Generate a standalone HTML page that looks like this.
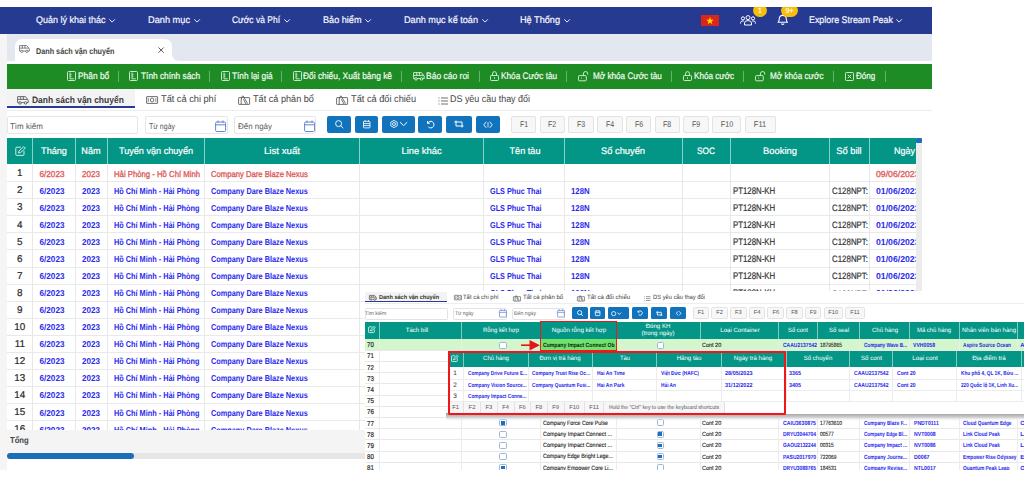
<!DOCTYPE html>
<html><head><meta charset="utf-8"><style>
html,body{margin:0;padding:0;width:1024px;height:478px;overflow:hidden;background:#fff;}
body{position:relative;font-family:'Liberation Sans', sans-serif;text-rendering:geometricPrecision;}
.a{position:absolute;display:block;}
.t{position:absolute;white-space:nowrap;display:block;}
svg.a{overflow:visible;}
</style></head><body>
<div class="a" style="left:0.00px;top:7.00px;width:932.00px;height:463.00px;background:#f5f5f5;"></div>
<div class="a" style="left:0.00px;top:7.00px;width:932.00px;height:26.50px;background:#263a91;"></div>
<div class="a" style="left:7.00px;top:33.50px;width:925.00px;height:27.50px;background:#e3e7ef;"></div>
<div class="a" style="left:7.00px;top:61.00px;width:925.00px;height:3.00px;background:#fff;"></div>
<div class="a" style="left:14.50px;top:39.00px;width:157.00px;height:25.00px;background:#fff;border-radius:7px 7px 0 0;"></div>
<div class="a" style="left:171.50px;top:53.00px;width:8.00px;height:8.00px;background:#fff;"></div>
<div class="a" style="left:171.50px;top:52.50px;width:9.00px;height:8.50px;background:#e3e7ef;border-radius:0 0 0 7px;"></div>
<div class="a" style="left:7.00px;top:64.00px;width:925.00px;height:25.00px;background:#1e8c25;"></div>
<div class="a" style="left:7.00px;top:89.00px;width:925.00px;height:381.00px;background:#fff;"></div>
<div class="a" style="left:7.00px;top:89.00px;width:128.00px;height:18.00px;background:#f3f3f3;"></div>
<div class="a" style="left:7.00px;top:106.30px;width:128.00px;height:2.00px;background:#2b3a9a;"></div>
<div class="a" style="left:7.00px;top:110.00px;width:925.00px;height:0.80px;background:#ededed;"></div>
<span class="t" style="top:16.29px;font-size:9.7px;line-height:9.7px;color:#f6f7ff;-webkit-text-stroke:0.2px currentColor;left:36.20px;transform:scaleX(0.9271);transform-origin:0 50%;">Quản lý khai thác</span>
<svg class="a" style="left:109.20px;top:18.60px;" width="6.5" height="4" viewBox="0 0 6.5 4"><polyline points="0.6,0.6 3.1,3.1 5.6,0.6" fill="none" stroke="#e8ebff" stroke-width="1.0" stroke-linecap="round" stroke-linejoin="round"/></svg>
<span class="t" style="top:16.29px;font-size:9.7px;line-height:9.7px;color:#f6f7ff;-webkit-text-stroke:0.2px currentColor;left:148.00px;transform:scaleX(0.9512);transform-origin:0 50%;">Danh mục</span>
<svg class="a" style="left:193.60px;top:18.60px;" width="6.5" height="4" viewBox="0 0 6.5 4"><polyline points="0.6,0.6 3.1,3.1 5.6,0.6" fill="none" stroke="#e8ebff" stroke-width="1.0" stroke-linecap="round" stroke-linejoin="round"/></svg>
<span class="t" style="top:16.29px;font-size:9.7px;line-height:9.7px;color:#f6f7ff;-webkit-text-stroke:0.2px currentColor;left:232.00px;transform:scaleX(0.8752);transform-origin:0 50%;">Cước và Phí</span>
<svg class="a" style="left:283.60px;top:18.60px;" width="6.5" height="4" viewBox="0 0 6.5 4"><polyline points="0.6,0.6 3.1,3.1 5.6,0.6" fill="none" stroke="#e8ebff" stroke-width="1.0" stroke-linecap="round" stroke-linejoin="round"/></svg>
<span class="t" style="top:16.29px;font-size:9.7px;line-height:9.7px;color:#f6f7ff;-webkit-text-stroke:0.2px currentColor;left:323.00px;transform:scaleX(0.9405);transform-origin:0 50%;">Bảo hiểm</span>
<svg class="a" style="left:365.10px;top:18.60px;" width="6.5" height="4" viewBox="0 0 6.5 4"><polyline points="0.6,0.6 3.1,3.1 5.6,0.6" fill="none" stroke="#e8ebff" stroke-width="1.0" stroke-linecap="round" stroke-linejoin="round"/></svg>
<span class="t" style="top:16.29px;font-size:9.7px;line-height:9.7px;color:#f6f7ff;-webkit-text-stroke:0.2px currentColor;left:404.00px;transform:scaleX(0.9412);transform-origin:0 50%;">Danh mục kế toán</span>
<svg class="a" style="left:481.60px;top:18.60px;" width="6.5" height="4" viewBox="0 0 6.5 4"><polyline points="0.6,0.6 3.1,3.1 5.6,0.6" fill="none" stroke="#e8ebff" stroke-width="1.0" stroke-linecap="round" stroke-linejoin="round"/></svg>
<span class="t" style="top:16.29px;font-size:9.7px;line-height:9.7px;color:#f6f7ff;-webkit-text-stroke:0.2px currentColor;left:520.00px;transform:scaleX(0.9440);transform-origin:0 50%;">Hệ Thống</span>
<svg class="a" style="left:563.60px;top:18.60px;" width="6.5" height="4" viewBox="0 0 6.5 4"><polyline points="0.6,0.6 3.1,3.1 5.6,0.6" fill="none" stroke="#e8ebff" stroke-width="1.0" stroke-linecap="round" stroke-linejoin="round"/></svg>
<span class="t" style="top:16.29px;font-size:9.7px;line-height:9.7px;color:#f6f7ff;-webkit-text-stroke:0.2px currentColor;left:808.80px;transform:scaleX(0.9165);transform-origin:0 50%;">Explore Stream Peak</span>
<svg class="a" style="left:896.30px;top:18.60px;" width="6.5" height="4" viewBox="0 0 6.5 4"><polyline points="0.6,0.6 3.1,3.1 5.6,0.6" fill="none" stroke="#e8ebff" stroke-width="1.0" stroke-linecap="round" stroke-linejoin="round"/></svg>
<div class="a" style="left:701.00px;top:15.20px;width:18.30px;height:11.00px;background:#da251d;"></div>
<svg class="a" style="left:706.20px;top:16.70px;" width="8" height="8" viewBox="0 0 8 8"><polygon points="4,0 4.94,2.7 7.8,2.76 5.52,4.5 6.35,7.24 4,5.6 1.65,7.24 2.48,4.5 0.2,2.76 3.06,2.7" fill="#ffde00"/></svg>
<svg class="a" style="left:740.40px;top:14.50px;" width="16" height="10.5" viewBox="0 0 16 10.5"><circle cx="8" cy="2.6" r="2" fill="none" stroke="#fff" stroke-width="1"/><circle cx="3" cy="3.4" r="1.6" fill="none" stroke="#fff" stroke-width="1"/><circle cx="13" cy="3.4" r="1.6" fill="none" stroke="#fff" stroke-width="1"/><path d="M4.5 10 V8 Q4.5 5.6 8 5.6 Q11.5 5.6 11.5 8 V10 Z" fill="none" stroke="#fff" stroke-width="1"/><path d="M0.6 8.6 V7.6 Q0.6 6 2.6 6 H3.8 M15.4 8.6 V7.6 Q15.4 6 13.4 6 H12.2" fill="none" stroke="#fff" stroke-width="1"/></svg>
<div class="a" style="left:753.30px;top:4.00px;width:13.40px;height:13.40px;background:#f8bf0a;border-radius:50%;"></div>
<span class="t" style="top:7.31px;font-size:7.2px;line-height:7.2px;color:#fff;-webkit-text-stroke:0.12px currentColor;left:760.00px;transform:translateX(-50%);">1</span>
<svg class="a" style="left:776.70px;top:14.30px;" width="11.5" height="11.5" viewBox="0 0 11.5 11.5"><path d="M1 8.3 Q2.2 7.3 2.2 5.2 Q2.2 1.4 5.75 1.4 Q9.3 1.4 9.3 5.2 Q9.3 7.3 10.5 8.3 Z" fill="none" stroke="#fff" stroke-width="1.1" stroke-linejoin="round"/><line x1="5.75" y1="0.2" x2="5.75" y2="1.4" stroke="#fff" stroke-width="1.1"/><path d="M4.3 9.6 Q5.75 11.2 7.2 9.6" fill="none" stroke="#fff" stroke-width="1.1"/></svg>
<div class="a" style="left:781.20px;top:4.00px;width:17.00px;height:13.40px;background:#f8bf0a;border-radius:7px;"></div>
<span class="t" style="top:7.31px;font-size:7.2px;line-height:7.2px;color:#fff;-webkit-text-stroke:0.12px currentColor;left:789.70px;transform:translateX(-50%);">9+</span>
<div class="a" style="left:0.00px;top:0.00px;width:1024.00px;height:7.00px;background:#fff;"></div>
<svg class="a" style="left:19.30px;top:45.20px;" width="11" height="8" viewBox="0 0 11 8"><path d="M0.55 0.55 H7.73 L10.30 3.86 V6.07 H0.55 Z" fill="none" stroke="#666" stroke-width="0.8" stroke-linejoin="round"/><path d="M0.55 3.13 H9.75 M3.40 0.55 V3.13 M5.89 0.55 V3.13" stroke="#666" stroke-width="0.8"/><circle cx="2.76" cy="6.35" r="1.15" fill="#fff" stroke="#666" stroke-width="0.8"/><circle cx="7.91" cy="6.35" r="1.15" fill="#fff" stroke="#666" stroke-width="0.8"/></svg>
<span class="t" style="top:47.09px;font-size:8.4px;line-height:8.4px;color:#444;font-weight:700;left:35.70px;transform:scaleX(0.8649);transform-origin:0 50%;">Danh sách vận chuyển</span>
<svg class="a" style="left:158.20px;top:47.30px;" width="6.2" height="6.2" viewBox="0 0 6.2 6.2"><path d="M0.5 0.5 L5.7 5.7 M5.7 0.5 L0.5 5.7" stroke="#555" stroke-width="1.0"/></svg>
<svg class="a" style="left:66.80px;top:71.40px;" width="9" height="10" viewBox="0 0 9 10"><rect x="0.5" y="0.5" width="8" height="9" rx="1" fill="none" stroke="#e8f5e8" stroke-width="0.85"/><path d="M3 1.5 V7.8 H6.8" fill="none" stroke="#e8f5e8" stroke-width="0.85"/><path d="M3 3.2 H4.6 M3 5.2 H4.6" stroke="#e8f5e8" stroke-width="0.68"/></svg>
<span class="t" style="top:71.66px;font-size:9.5px;line-height:9.5px;color:#f4fbf4;-webkit-text-stroke:0.2px currentColor;left:77.60px;transform:scaleX(0.8812);transform-origin:0 50%;">Phân bổ</span>
<div class="a" style="left:117.60px;top:70.60px;width:0.80px;height:11.00px;background:rgba(255,255,255,0.33);"></div>
<svg class="a" style="left:129.30px;top:71.40px;" width="9" height="10" viewBox="0 0 9 10"><rect x="0.5" y="0.5" width="8" height="9" rx="1" fill="none" stroke="#e8f5e8" stroke-width="0.85"/><path d="M3 1.5 V7.8 H6.8" fill="none" stroke="#e8f5e8" stroke-width="0.85"/><path d="M3 3.2 H4.6 M3 5.2 H4.6" stroke="#e8f5e8" stroke-width="0.68"/></svg>
<span class="t" style="top:71.66px;font-size:9.5px;line-height:9.5px;color:#f4fbf4;-webkit-text-stroke:0.2px currentColor;left:140.50px;transform:scaleX(0.8741);transform-origin:0 50%;">Tính chính sách</span>
<div class="a" style="left:208.80px;top:70.60px;width:0.80px;height:11.00px;background:rgba(255,255,255,0.33);"></div>
<svg class="a" style="left:220.50px;top:71.40px;" width="9" height="10" viewBox="0 0 9 10"><rect x="0.5" y="0.5" width="8" height="9" rx="1" fill="none" stroke="#e8f5e8" stroke-width="0.85"/><path d="M3 1.5 V7.8 H6.8" fill="none" stroke="#e8f5e8" stroke-width="0.85"/><path d="M3 3.2 H4.6 M3 5.2 H4.6" stroke="#e8f5e8" stroke-width="0.68"/></svg>
<span class="t" style="top:71.66px;font-size:9.5px;line-height:9.5px;color:#f4fbf4;-webkit-text-stroke:0.2px currentColor;left:232.00px;transform:scaleX(0.8734);transform-origin:0 50%;">Tính lại giá</span>
<div class="a" style="left:280.60px;top:70.60px;width:0.80px;height:11.00px;background:rgba(255,255,255,0.33);"></div>
<svg class="a" style="left:293.00px;top:71.40px;" width="9" height="10" viewBox="0 0 9 10"><rect x="0.5" y="0.5" width="8" height="9" rx="1" fill="none" stroke="#e8f5e8" stroke-width="0.85"/><path d="M3 1.5 V7.8 H6.8" fill="none" stroke="#e8f5e8" stroke-width="0.85"/><path d="M3 3.2 H4.6 M3 5.2 H4.6" stroke="#e8f5e8" stroke-width="0.68"/></svg>
<span class="t" style="top:71.66px;font-size:9.5px;line-height:9.5px;color:#f4fbf4;-webkit-text-stroke:0.2px currentColor;left:303.00px;transform:scaleX(0.8823);transform-origin:0 50%;">Đối chiếu, Xuất bảng kê</span>
<div class="a" style="left:401.00px;top:70.60px;width:0.80px;height:11.00px;background:rgba(255,255,255,0.33);"></div>
<svg class="a" style="left:412.80px;top:72.20px;" width="12" height="8.5" viewBox="0 0 12 8.5"><path d="M0.60 0.60 H8.40 L11.20 4.20 V6.60 H0.60 Z" fill="none" stroke="#e8f5e8" stroke-width="0.85" stroke-linejoin="round"/><path d="M0.60 3.40 H10.60 M3.70 0.60 V3.40 M6.40 0.60 V3.40" stroke="#e8f5e8" stroke-width="0.85"/><circle cx="3.00" cy="6.90" r="1.25" fill="#1e8c25" stroke="#e8f5e8" stroke-width="0.85"/><circle cx="8.60" cy="6.90" r="1.25" fill="#1e8c25" stroke="#e8f5e8" stroke-width="0.85"/></svg>
<span class="t" style="top:71.66px;font-size:9.5px;line-height:9.5px;color:#f4fbf4;-webkit-text-stroke:0.2px currentColor;left:426.00px;transform:scaleX(0.8947);transform-origin:0 50%;">Báo cáo roi</span>
<div class="a" style="left:478.60px;top:70.60px;width:0.80px;height:11.00px;background:rgba(255,255,255,0.33);"></div>
<svg class="a" style="left:490.00px;top:71.40px;" width="9" height="10" viewBox="0 0 9 10"><rect x="0.5" y="4.5" width="8" height="5" rx="0.8" fill="none" stroke="#e8f5e8" stroke-width="0.85"/><path d="M2.5 4.5 V3 Q2.5 0.6 4.5 0.6 Q6.5 0.6 6.5 3 V4.5" fill="none" stroke="#e8f5e8" stroke-width="0.85"/><line x1="4.5" y1="6.3" x2="4.5" y2="7.8" stroke="#e8f5e8" stroke-width="0.85"/></svg>
<span class="t" style="top:71.66px;font-size:9.5px;line-height:9.5px;color:#f4fbf4;-webkit-text-stroke:0.2px currentColor;left:500.80px;transform:scaleX(0.8663);transform-origin:0 50%;">Khóa Cước tàu</span>
<div class="a" style="left:565.60px;top:70.60px;width:0.80px;height:11.00px;background:rgba(255,255,255,0.33);"></div>
<svg class="a" style="left:578.30px;top:71.40px;" width="9" height="10" viewBox="0 0 9 10"><rect x="0.5" y="4.6" width="7.8" height="5.2" rx="0.9" fill="none" stroke="#e8f5e8" stroke-width="0.85"/><path d="M5.4 4.6 V2.9 Q5.4 0.5 7.6 0.5 Q9.8 0.5 9.8 2.9 V3.6" fill="none" stroke="#e8f5e8" stroke-width="0.85"/><line x1="3.6" y1="6.6" x2="3.6" y2="7.6" stroke="#e8f5e8" stroke-width="0.85"/></svg>
<span class="t" style="top:71.66px;font-size:9.5px;line-height:9.5px;color:#f4fbf4;-webkit-text-stroke:0.2px currentColor;left:592.60px;transform:scaleX(0.8592);transform-origin:0 50%;">Mở khóa Cước tàu</span>
<div class="a" style="left:670.70px;top:70.60px;width:0.80px;height:11.00px;background:rgba(255,255,255,0.33);"></div>
<svg class="a" style="left:683.00px;top:71.40px;" width="9" height="10" viewBox="0 0 9 10"><rect x="0.5" y="4.5" width="8" height="5" rx="0.8" fill="none" stroke="#e8f5e8" stroke-width="0.85"/><path d="M2.5 4.5 V3 Q2.5 0.6 4.5 0.6 Q6.5 0.6 6.5 3 V4.5" fill="none" stroke="#e8f5e8" stroke-width="0.85"/><line x1="4.5" y1="6.3" x2="4.5" y2="7.8" stroke="#e8f5e8" stroke-width="0.85"/></svg>
<span class="t" style="top:71.66px;font-size:9.5px;line-height:9.5px;color:#f4fbf4;-webkit-text-stroke:0.2px currentColor;left:693.60px;transform:scaleX(0.8567);transform-origin:0 50%;">Khóa cước</span>
<div class="a" style="left:743.40px;top:70.60px;width:0.80px;height:11.00px;background:rgba(255,255,255,0.33);"></div>
<svg class="a" style="left:755.40px;top:71.40px;" width="9" height="10" viewBox="0 0 9 10"><rect x="0.5" y="4.6" width="7.8" height="5.2" rx="0.9" fill="none" stroke="#e8f5e8" stroke-width="0.85"/><path d="M5.4 4.6 V2.9 Q5.4 0.5 7.6 0.5 Q9.8 0.5 9.8 2.9 V3.6" fill="none" stroke="#e8f5e8" stroke-width="0.85"/><line x1="3.6" y1="6.6" x2="3.6" y2="7.6" stroke="#e8f5e8" stroke-width="0.85"/></svg>
<span class="t" style="top:71.66px;font-size:9.5px;line-height:9.5px;color:#f4fbf4;-webkit-text-stroke:0.2px currentColor;left:770.00px;transform:scaleX(0.8612);transform-origin:0 50%;">Mở khóa cước</span>
<div class="a" style="left:832.50px;top:70.60px;width:0.80px;height:11.00px;background:rgba(255,255,255,0.33);"></div>
<svg class="a" style="left:845.00px;top:72.00px;" width="9" height="9" viewBox="0 0 9 9"><rect x="0.5" y="0.5" width="8" height="8" rx="0.8" fill="none" stroke="#e8f5e8" stroke-width="0.85"/><path d="M2.8 2.8 L6.2 6.2 M6.2 2.8 L2.8 6.2" stroke="#e8f5e8" stroke-width="0.85"/></svg>
<span class="t" style="top:71.66px;font-size:9.5px;line-height:9.5px;color:#f4fbf4;-webkit-text-stroke:0.2px currentColor;left:856.40px;transform:scaleX(0.8451);transform-origin:0 50%;">Đóng</span>
<div class="a" style="left:885.00px;top:70.60px;width:0.80px;height:11.00px;background:rgba(255,255,255,0.33);"></div>
<svg class="a" style="left:17.00px;top:95.80px;" width="12" height="8.5" viewBox="0 0 12 8.5"><path d="M0.60 0.60 H8.40 L11.20 4.20 V6.60 H0.60 Z" fill="none" stroke="#555" stroke-width="0.85" stroke-linejoin="round"/><path d="M0.60 3.40 H10.60 M3.70 0.60 V3.40 M6.40 0.60 V3.40" stroke="#555" stroke-width="0.85"/><circle cx="3.00" cy="6.90" r="1.25" fill="#f3f3f3" stroke="#555" stroke-width="0.85"/><circle cx="8.60" cy="6.90" r="1.25" fill="#f3f3f3" stroke="#555" stroke-width="0.85"/></svg>
<span class="t" style="top:95.73px;font-size:9.3px;line-height:9.3px;color:#3a3a3a;font-weight:700;left:31.90px;transform:scaleX(0.9112);transform-origin:0 50%;">Danh sách vận chuyển</span>
<svg class="a" style="left:146.00px;top:95.80px;" width="12" height="8" viewBox="0 0 12 8"><rect x="0.6" y="0.6" width="11" height="6.8" rx="0.4" fill="none" stroke="#555" stroke-width="0.85"/><ellipse cx="6.1" cy="4" rx="1.7" ry="2" fill="none" stroke="#555" stroke-width="0.85"/><path d="M2.2 2 Q2.8 4 2.2 6 M10 2 Q9.4 4 10 6" fill="none" stroke="#555" stroke-width="0.68"/></svg>
<span class="t" style="top:95.20px;font-size:9.8px;line-height:9.8px;color:#444;left:160.70px;transform:scaleX(0.9403);transform-origin:0 50%;">Tất cả chi phí</span>
<svg class="a" style="left:237.60px;top:94.80px;" width="12" height="10" viewBox="0 0 12 10"><rect x="0.6" y="2.6" width="11" height="6.8" rx="0.5" fill="none" stroke="#555" stroke-width="0.85"/><path d="M3.2 9.2 L3.2 5 Q3.2 1 5 0.8 L9.6 8.6 M5.4 4.2 L8 9" fill="none" stroke="#555" stroke-width="0.85"/></svg>
<span class="t" style="top:95.20px;font-size:9.8px;line-height:9.8px;color:#444;left:252.70px;transform:scaleX(0.9318);transform-origin:0 50%;">Tất cả phân bổ</span>
<svg class="a" style="left:335.60px;top:94.80px;" width="12" height="10" viewBox="0 0 12 10"><rect x="0.6" y="2.6" width="11" height="6.8" rx="0.5" fill="none" stroke="#555" stroke-width="0.85"/><path d="M3.2 9.2 L3.2 5 Q3.2 1 5 0.8 L9.6 8.6 M5.4 4.2 L8 9" fill="none" stroke="#555" stroke-width="0.85"/></svg>
<span class="t" style="top:95.20px;font-size:9.8px;line-height:9.8px;color:#444;left:350.60px;transform:scaleX(0.9411);transform-origin:0 50%;">Tất cả đối chiếu</span>
<svg class="a" style="left:438.00px;top:97.30px;" width="10" height="8" viewBox="0 0 10 8"><path d="M0.5 1 h1 M0.5 4 h1 M0.5 7 h1 M3 1 H10 M3 4 H10 M3 7 H10" stroke="#555" stroke-width="0.85"/></svg>
<span class="t" style="top:95.20px;font-size:9.8px;line-height:9.8px;color:#444;left:450.00px;transform:scaleX(0.9123);transform-origin:0 50%;">DS yêu cầu thay đổi</span>
<div class="a" style="left:7.30px;top:115.60px;width:130.60px;height:18.70px;background:#fff;border:0.8px solid #e6e6e6;border-radius:2px;box-sizing:border-box;"></div>
<span class="t" style="top:122.56px;font-size:8.2px;line-height:8.2px;color:#555;left:10.30px;transform:scaleX(0.9741);transform-origin:0 50%;">Tìm kiếm</span>
<div class="a" style="left:145.20px;top:115.60px;width:82.40px;height:18.70px;background:#fff;border:0.8px solid #e6e6e6;border-radius:2px;box-sizing:border-box;"></div>
<span class="t" style="top:122.56px;font-size:8.2px;line-height:8.2px;color:#555;left:148.50px;transform:scaleX(0.8520);transform-origin:0 50%;">Từ ngày</span>
<svg class="a" style="left:215.40px;top:119.80px;" width="11" height="12" viewBox="0 0 11 12"><rect x="0.6" y="2" width="10" height="9.5" rx="1.2" fill="none" stroke="#5b80cf" stroke-width="0.95"/><line x1="0.6" y1="4.8" x2="10.6" y2="4.8" stroke="#5b80cf" stroke-width="0.95"/><line x1="3" y1="0.5" x2="3" y2="3" stroke="#5b80cf" stroke-width="0.95"/><line x1="8" y1="0.5" x2="8" y2="3" stroke="#5b80cf" stroke-width="0.95"/></svg>
<div class="a" style="left:234.20px;top:115.60px;width:82.10px;height:18.70px;background:#fff;border:0.8px solid #e6e6e6;border-radius:2px;box-sizing:border-box;"></div>
<span class="t" style="top:122.56px;font-size:8.2px;line-height:8.2px;color:#555;left:238.20px;transform:scaleX(0.9697);transform-origin:0 50%;">Đến ngày</span>
<svg class="a" style="left:304.10px;top:119.80px;" width="11" height="12" viewBox="0 0 11 12"><rect x="0.6" y="2" width="10" height="9.5" rx="1.2" fill="none" stroke="#5b80cf" stroke-width="0.95"/><line x1="0.6" y1="4.8" x2="10.6" y2="4.8" stroke="#5b80cf" stroke-width="0.95"/><line x1="3" y1="0.5" x2="3" y2="3" stroke="#5b80cf" stroke-width="0.95"/><line x1="8" y1="0.5" x2="8" y2="3" stroke="#5b80cf" stroke-width="0.95"/></svg>
<div class="a" style="left:326.90px;top:116.00px;width:24.20px;height:16.80px;background:#1173bc;border-radius:2px;"></div>
<div class="a" style="left:354.80px;top:116.00px;width:23.20px;height:16.80px;background:#1173bc;border-radius:2px;"></div>
<div class="a" style="left:381.90px;top:116.00px;width:33.10px;height:16.80px;background:#1173bc;border-radius:2px;"></div>
<div class="a" style="left:418.20px;top:116.00px;width:24.20px;height:16.80px;background:#1173bc;border-radius:2px;"></div>
<div class="a" style="left:446.30px;top:116.00px;width:25.70px;height:16.80px;background:#1173bc;border-radius:2px;"></div>
<div class="a" style="left:475.70px;top:116.00px;width:24.30px;height:16.80px;background:#1173bc;border-radius:2px;"></div>
<svg class="a" style="left:334.80px;top:120.40px;" width="9" height="9" viewBox="0 0 9 9"><circle cx="3.6" cy="3.6" r="3" fill="none" stroke="#fff" stroke-width="0.9"/><line x1="5.8" y1="5.8" x2="8" y2="8" stroke="#fff" stroke-width="0.9" stroke-linecap="round"/></svg>
<svg class="a" style="left:362.80px;top:120.20px;" width="7.5" height="8.2" viewBox="0 0 7.5 8.2"><rect x="0.5" y="1.3" width="6.5" height="6.6" rx="0.6" fill="none" stroke="#fff" stroke-width="0.85"/><path d="M0.5 3.6 H7 M0.5 5.6 H7 M2 0.2 V1.8 M5.5 0.2 V1.8" stroke="#fff" stroke-width="0.85"/></svg>
<svg class="a" style="left:390.00px;top:120.20px;" width="18" height="8" viewBox="0 0 18 8"><polygon points="4,0.4 7.2,2.2 7.2,5.8 4,7.6 0.8,5.8 0.8,2.2" fill="none" stroke="#fff" stroke-width="0.85"/><circle cx="4" cy="4" r="1.5" fill="none" stroke="#fff" stroke-width="0.85"/><polyline points="10,2.2 13.6,5.6 17.2,2.2" fill="none" stroke="#fff" stroke-width="1"/></svg>
<svg class="a" style="left:426.30px;top:120.20px;" width="8.5" height="8.5" viewBox="0 0 8.5 8.5"><path d="M1.5 1 V3.3 H3.8" fill="none" stroke="#fff" stroke-width="1"/><path d="M1.7 3.2 A3.3 3.3 0 1 1 2.4 7" fill="none" stroke="#fff" stroke-width="1"/></svg>
<svg class="a" style="left:454.15px;top:120.40px;" width="10" height="8" viewBox="0 0 10 8"><path d="M2 0.5 V6 H9.5 M0.3 2 H8 V7.5" fill="none" stroke="#fff" stroke-width="1"/></svg>
<svg class="a" style="left:482.90px;top:120.60px;" width="10" height="8" viewBox="0 0 10 8"><path d="M3.2 0.8 L0.8 3.8 L3.2 6.8 M6.8 0.8 L9.2 3.8 L6.8 6.8" fill="none" stroke="#fff" stroke-width="0.9"/><line x1="5" y1="1.2" x2="5" y2="6.4" stroke="#fff" stroke-width="0.8"/></svg>
<div class="a" style="left:511.00px;top:115.50px;width:25.40px;height:17.00px;background:#f7f7f7;border:0.8px solid #e3e3e3;border-radius:2px;box-sizing:border-box;"></div>
<span class="t" style="top:120.29px;font-size:8.4px;line-height:8.4px;color:#555;left:523.70px;transform:translateX(-50%) scaleX(0.8383);transform-origin:50% 50%;">F1</span>
<div class="a" style="left:539.70px;top:115.50px;width:25.50px;height:17.00px;background:#f7f7f7;border:0.8px solid #e3e3e3;border-radius:2px;box-sizing:border-box;"></div>
<span class="t" style="top:120.29px;font-size:8.4px;line-height:8.4px;color:#555;left:552.45px;transform:translateX(-50%) scaleX(0.8383);transform-origin:50% 50%;">F2</span>
<div class="a" style="left:568.40px;top:115.50px;width:25.50px;height:17.00px;background:#f7f7f7;border:0.8px solid #e3e3e3;border-radius:2px;box-sizing:border-box;"></div>
<span class="t" style="top:120.29px;font-size:8.4px;line-height:8.4px;color:#555;left:581.15px;transform:translateX(-50%) scaleX(0.8383);transform-origin:50% 50%;">F3</span>
<div class="a" style="left:597.20px;top:115.50px;width:25.40px;height:17.00px;background:#f7f7f7;border:0.8px solid #e3e3e3;border-radius:2px;box-sizing:border-box;"></div>
<span class="t" style="top:120.29px;font-size:8.4px;line-height:8.4px;color:#555;left:609.90px;transform:translateX(-50%) scaleX(0.8383);transform-origin:50% 50%;">F4</span>
<div class="a" style="left:625.90px;top:115.50px;width:25.40px;height:17.00px;background:#f7f7f7;border:0.8px solid #e3e3e3;border-radius:2px;box-sizing:border-box;"></div>
<span class="t" style="top:120.29px;font-size:8.4px;line-height:8.4px;color:#555;left:638.60px;transform:translateX(-50%) scaleX(0.8383);transform-origin:50% 50%;">F6</span>
<div class="a" style="left:654.60px;top:115.50px;width:25.40px;height:17.00px;background:#f7f7f7;border:0.8px solid #e3e3e3;border-radius:2px;box-sizing:border-box;"></div>
<span class="t" style="top:120.29px;font-size:8.4px;line-height:8.4px;color:#555;left:667.30px;transform:translateX(-50%) scaleX(0.8383);transform-origin:50% 50%;">F8</span>
<div class="a" style="left:683.30px;top:115.50px;width:25.40px;height:17.00px;background:#f7f7f7;border:0.8px solid #e3e3e3;border-radius:2px;box-sizing:border-box;"></div>
<span class="t" style="top:120.29px;font-size:8.4px;line-height:8.4px;color:#555;left:696.00px;transform:translateX(-50%) scaleX(0.8383);transform-origin:50% 50%;">F9</span>
<div class="a" style="left:712.30px;top:115.50px;width:29.20px;height:17.00px;background:#f7f7f7;border:0.8px solid #e3e3e3;border-radius:2px;box-sizing:border-box;"></div>
<span class="t" style="top:120.29px;font-size:8.4px;line-height:8.4px;color:#555;left:726.90px;transform:translateX(-50%) scaleX(0.8519);transform-origin:50% 50%;">F10</span>
<div class="a" style="left:745.00px;top:115.50px;width:30.70px;height:17.00px;background:#f7f7f7;border:0.8px solid #e3e3e3;border-radius:2px;box-sizing:border-box;"></div>
<span class="t" style="top:120.29px;font-size:8.4px;line-height:8.4px;color:#555;left:760.35px;transform:translateX(-50%) scaleX(0.8905);transform-origin:50% 50%;">F11</span>
<div class="a" style="left:7.00px;top:138.00px;width:909.00px;height:26.00px;background:#039687;"></div>
<div class="a" style="left:32.10px;top:138.00px;width:0.90px;height:26.00px;background:rgba(255,255,255,0.55);"></div>
<div class="a" style="left:75.10px;top:138.00px;width:0.90px;height:26.00px;background:rgba(255,255,255,0.55);"></div>
<div class="a" style="left:106.60px;top:138.00px;width:0.90px;height:26.00px;background:rgba(255,255,255,0.55);"></div>
<div class="a" style="left:204.10px;top:138.00px;width:0.90px;height:26.00px;background:rgba(255,255,255,0.55);"></div>
<div class="a" style="left:359.10px;top:138.00px;width:0.90px;height:26.00px;background:rgba(255,255,255,0.55);"></div>
<div class="a" style="left:483.10px;top:138.00px;width:0.90px;height:26.00px;background:rgba(255,255,255,0.55);"></div>
<div class="a" style="left:564.10px;top:138.00px;width:0.90px;height:26.00px;background:rgba(255,255,255,0.55);"></div>
<div class="a" style="left:681.60px;top:138.00px;width:0.90px;height:26.00px;background:rgba(255,255,255,0.55);"></div>
<div class="a" style="left:729.60px;top:138.00px;width:0.90px;height:26.00px;background:rgba(255,255,255,0.55);"></div>
<div class="a" style="left:829.10px;top:138.00px;width:0.90px;height:26.00px;background:rgba(255,255,255,0.55);"></div>
<div class="a" style="left:869.10px;top:138.00px;width:0.90px;height:26.00px;background:rgba(255,255,255,0.55);"></div>
<svg class="a" style="left:15.00px;top:146.30px;" width="11" height="10" viewBox="0 0 11 10"><path d="M6 1.2 H1.8 Q0.8 1.2 0.8 2.2 V8.6 Q0.8 9.4 1.8 9.4 H8 Q9 9.4 9 8.4 V5" fill="none" stroke="#e6f5f2" stroke-width="0.9"/><path d="M3.5 7 L4 5 L8.8 0.6 L10.4 2.2 L5.6 6.6 Z" fill="none" stroke="#e6f5f2" stroke-width="0.9" stroke-linejoin="round"/></svg>
<span class="t" style="top:145.64px;font-size:9.4px;line-height:9.4px;color:#ffffff;-webkit-text-stroke:0.2px currentColor;left:54.00px;transform:translateX(-50%) scaleX(0.9739);transform-origin:50% 50%;">Tháng</span>
<span class="t" style="top:145.64px;font-size:9.4px;line-height:9.4px;color:#ffffff;-webkit-text-stroke:0.2px currentColor;left:91.30px;transform:translateX(-50%) scaleX(0.9749);transform-origin:50% 50%;">Năm</span>
<span class="t" style="top:145.64px;font-size:9.4px;line-height:9.4px;color:#ffffff;-webkit-text-stroke:0.2px currentColor;left:156.30px;transform:translateX(-50%) scaleX(0.9716);transform-origin:50% 50%;">Tuyến vận chuyển</span>
<span class="t" style="top:145.64px;font-size:9.4px;line-height:9.4px;color:#ffffff;-webkit-text-stroke:0.2px currentColor;left:282.00px;transform:translateX(-50%) scaleX(1.0309);transform-origin:50% 50%;">List xuất</span>
<span class="t" style="top:145.64px;font-size:9.4px;line-height:9.4px;color:#ffffff;-webkit-text-stroke:0.2px currentColor;left:421.60px;transform:translateX(-50%);">Line khác</span>
<span class="t" style="top:145.64px;font-size:9.4px;line-height:9.4px;color:#ffffff;-webkit-text-stroke:0.2px currentColor;left:524.50px;transform:translateX(-50%) scaleX(0.9749);transform-origin:50% 50%;">Tên tàu</span>
<span class="t" style="top:145.64px;font-size:9.4px;line-height:9.4px;color:#ffffff;-webkit-text-stroke:0.2px currentColor;left:623.30px;transform:translateX(-50%) scaleX(0.9929);transform-origin:50% 50%;">Số chuyến</span>
<span class="t" style="top:145.64px;font-size:9.4px;line-height:9.4px;color:#ffffff;-webkit-text-stroke:0.2px currentColor;left:706.00px;transform:translateX(-50%) scaleX(0.8855);transform-origin:50% 50%;">SOC</span>
<span class="t" style="top:145.64px;font-size:9.4px;line-height:9.4px;color:#ffffff;-webkit-text-stroke:0.2px currentColor;left:779.70px;transform:translateX(-50%) scaleX(0.9973);transform-origin:50% 50%;">Booking</span>
<span class="t" style="top:145.64px;font-size:9.4px;line-height:9.4px;color:#ffffff;-webkit-text-stroke:0.2px currentColor;left:849.30px;transform:translateX(-50%) scaleX(0.9943);transform-origin:50% 50%;">Số bill</span>
<span class="t" style="top:145.64px;font-size:9.4px;line-height:9.4px;color:#ffffff;-webkit-text-stroke:0.2px currentColor;left:893.50px;transform:scaleX(0.9593);transform-origin:0 50%;">Ngày</span>
<div class="a" style="left:7px;top:164px;width:909px;height:266px;overflow:hidden;background:#fff;">
<div class="a" style="left:0.00px;top:17.17px;width:909.00px;height:1.00px;background:#e9e9e9;"></div>
<span class="t" style="top:5.32px;font-size:9.9px;line-height:9.9px;color:#2a2a2a;-webkit-text-stroke:0.2px currentColor;left:12.80px;transform:translateX(-50%);">1</span>
<span class="t" style="top:5.52px;font-size:8.6px;line-height:8.6px;color:#e05c5c;-webkit-text-stroke:0.35px currentColor;left:44.50px;transform:translateX(-50%) scaleX(0.9507);transform-origin:50% 50%;">6/2023</span>
<span class="t" style="top:5.52px;font-size:8.6px;line-height:8.6px;color:#e05c5c;-webkit-text-stroke:0.35px currentColor;left:84.00px;transform:translateX(-50%) scaleX(0.9412);transform-origin:50% 50%;">2023</span>
<span class="t" style="top:5.52px;font-size:8.6px;line-height:8.6px;color:#e05c5c;-webkit-text-stroke:0.35px currentColor;left:107.00px;transform:scaleX(0.9002);transform-origin:0 50%;">Hải Phòng - Hồ Chí Minh</span>
<span class="t" style="top:5.52px;font-size:8.6px;line-height:8.6px;color:#e05c5c;-webkit-text-stroke:0.35px currentColor;left:204.00px;transform:scaleX(0.8927);transform-origin:0 50%;">Company Dare Blaze Nexus</span>
<span class="t" style="top:5.52px;font-size:8.6px;line-height:8.6px;color:#e05c5c;-webkit-text-stroke:0.35px currentColor;left:868.90px;transform:scaleX(1.0113);transform-origin:0 50%;">09/06/2023</span>
<div class="a" style="left:0.00px;top:34.24px;width:909.00px;height:1.00px;background:#e9e9e9;"></div>
<span class="t" style="top:22.39px;font-size:9.9px;line-height:9.9px;color:#2a2a2a;-webkit-text-stroke:0.2px currentColor;left:12.80px;transform:translateX(-50%);">2</span>
<span class="t" style="top:22.59px;font-size:8.6px;line-height:8.6px;color:#2a2aee;font-weight:700;left:44.50px;transform:translateX(-50%) scaleX(0.9507);transform-origin:50% 50%;">6/2023</span>
<span class="t" style="top:22.59px;font-size:8.6px;line-height:8.6px;color:#2a2aee;font-weight:700;left:84.00px;transform:translateX(-50%) scaleX(0.9412);transform-origin:50% 50%;">2023</span>
<span class="t" style="top:22.59px;font-size:8.6px;line-height:8.6px;color:#2a2aee;font-weight:700;left:107.00px;transform:scaleX(0.8519);transform-origin:0 50%;">Hồ Chí Minh - Hải Phòng</span>
<span class="t" style="top:22.59px;font-size:8.6px;line-height:8.6px;color:#2a2aee;font-weight:700;left:204.00px;transform:scaleX(0.8516);transform-origin:0 50%;">Company Dare Blaze Nexus</span>
<span class="t" style="top:22.59px;font-size:8.6px;line-height:8.6px;color:#2a2aee;font-weight:700;left:482.80px;transform:scaleX(0.8442);transform-origin:0 50%;">GLS Phuc Thai</span>
<span class="t" style="top:22.59px;font-size:8.6px;line-height:8.6px;color:#2a2aee;font-weight:700;left:564.40px;transform:scaleX(0.9101);transform-origin:0 50%;">128N</span>
<span class="t" style="top:22.74px;font-size:9.6px;line-height:9.6px;color:#333;-webkit-text-stroke:0.2px currentColor;left:726.30px;transform:scaleX(0.8140);transform-origin:0 50%;">PT128N-KH</span>
<span class="t" style="top:23.08px;font-size:9.2px;line-height:9.2px;color:#333;-webkit-text-stroke:0.2px currentColor;left:825.40px;transform:scaleX(0.8597);transform-origin:0 50%;">C128NPT:</span>
<span class="t" style="top:22.59px;font-size:8.6px;line-height:8.6px;color:#2a2aee;font-weight:700;left:868.90px;transform:scaleX(1.0113);transform-origin:0 50%;">01/06/2023</span>
<div class="a" style="left:0.00px;top:51.31px;width:909.00px;height:1.00px;background:#e9e9e9;"></div>
<span class="t" style="top:39.46px;font-size:9.9px;line-height:9.9px;color:#2a2a2a;-webkit-text-stroke:0.2px currentColor;left:12.80px;transform:translateX(-50%);">3</span>
<span class="t" style="top:39.66px;font-size:8.6px;line-height:8.6px;color:#2a2aee;font-weight:700;left:44.50px;transform:translateX(-50%) scaleX(0.9507);transform-origin:50% 50%;">6/2023</span>
<span class="t" style="top:39.66px;font-size:8.6px;line-height:8.6px;color:#2a2aee;font-weight:700;left:84.00px;transform:translateX(-50%) scaleX(0.9412);transform-origin:50% 50%;">2023</span>
<span class="t" style="top:39.66px;font-size:8.6px;line-height:8.6px;color:#2a2aee;font-weight:700;left:107.00px;transform:scaleX(0.8519);transform-origin:0 50%;">Hồ Chí Minh - Hải Phòng</span>
<span class="t" style="top:39.66px;font-size:8.6px;line-height:8.6px;color:#2a2aee;font-weight:700;left:204.00px;transform:scaleX(0.8516);transform-origin:0 50%;">Company Dare Blaze Nexus</span>
<span class="t" style="top:39.66px;font-size:8.6px;line-height:8.6px;color:#2a2aee;font-weight:700;left:482.80px;transform:scaleX(0.8442);transform-origin:0 50%;">GLS Phuc Thai</span>
<span class="t" style="top:39.66px;font-size:8.6px;line-height:8.6px;color:#2a2aee;font-weight:700;left:564.40px;transform:scaleX(0.9101);transform-origin:0 50%;">128N</span>
<span class="t" style="top:39.81px;font-size:9.6px;line-height:9.6px;color:#333;-webkit-text-stroke:0.2px currentColor;left:726.30px;transform:scaleX(0.8140);transform-origin:0 50%;">PT128N-KH</span>
<span class="t" style="top:40.15px;font-size:9.2px;line-height:9.2px;color:#333;-webkit-text-stroke:0.2px currentColor;left:825.40px;transform:scaleX(0.8597);transform-origin:0 50%;">C128NPT:</span>
<span class="t" style="top:39.66px;font-size:8.6px;line-height:8.6px;color:#2a2aee;font-weight:700;left:868.90px;transform:scaleX(1.0113);transform-origin:0 50%;">01/06/2023</span>
<div class="a" style="left:0.00px;top:68.38px;width:909.00px;height:1.00px;background:#e9e9e9;"></div>
<span class="t" style="top:56.53px;font-size:9.9px;line-height:9.9px;color:#2a2a2a;-webkit-text-stroke:0.2px currentColor;left:12.80px;transform:translateX(-50%);">4</span>
<span class="t" style="top:56.73px;font-size:8.6px;line-height:8.6px;color:#2a2aee;font-weight:700;left:44.50px;transform:translateX(-50%) scaleX(0.9507);transform-origin:50% 50%;">6/2023</span>
<span class="t" style="top:56.73px;font-size:8.6px;line-height:8.6px;color:#2a2aee;font-weight:700;left:84.00px;transform:translateX(-50%) scaleX(0.9412);transform-origin:50% 50%;">2023</span>
<span class="t" style="top:56.73px;font-size:8.6px;line-height:8.6px;color:#2a2aee;font-weight:700;left:107.00px;transform:scaleX(0.8519);transform-origin:0 50%;">Hồ Chí Minh - Hải Phòng</span>
<span class="t" style="top:56.73px;font-size:8.6px;line-height:8.6px;color:#2a2aee;font-weight:700;left:204.00px;transform:scaleX(0.8516);transform-origin:0 50%;">Company Dare Blaze Nexus</span>
<span class="t" style="top:56.73px;font-size:8.6px;line-height:8.6px;color:#2a2aee;font-weight:700;left:482.80px;transform:scaleX(0.8442);transform-origin:0 50%;">GLS Phuc Thai</span>
<span class="t" style="top:56.73px;font-size:8.6px;line-height:8.6px;color:#2a2aee;font-weight:700;left:564.40px;transform:scaleX(0.9101);transform-origin:0 50%;">128N</span>
<span class="t" style="top:56.88px;font-size:9.6px;line-height:9.6px;color:#333;-webkit-text-stroke:0.2px currentColor;left:726.30px;transform:scaleX(0.8140);transform-origin:0 50%;">PT128N-KH</span>
<span class="t" style="top:57.22px;font-size:9.2px;line-height:9.2px;color:#333;-webkit-text-stroke:0.2px currentColor;left:825.40px;transform:scaleX(0.8597);transform-origin:0 50%;">C128NPT:</span>
<span class="t" style="top:56.73px;font-size:8.6px;line-height:8.6px;color:#2a2aee;font-weight:700;left:868.90px;transform:scaleX(1.0113);transform-origin:0 50%;">01/06/2023</span>
<div class="a" style="left:0.00px;top:85.45px;width:909.00px;height:1.00px;background:#e9e9e9;"></div>
<span class="t" style="top:73.60px;font-size:9.9px;line-height:9.9px;color:#2a2a2a;-webkit-text-stroke:0.2px currentColor;left:12.80px;transform:translateX(-50%);">5</span>
<span class="t" style="top:73.80px;font-size:8.6px;line-height:8.6px;color:#2a2aee;font-weight:700;left:44.50px;transform:translateX(-50%) scaleX(0.9507);transform-origin:50% 50%;">6/2023</span>
<span class="t" style="top:73.80px;font-size:8.6px;line-height:8.6px;color:#2a2aee;font-weight:700;left:84.00px;transform:translateX(-50%) scaleX(0.9412);transform-origin:50% 50%;">2023</span>
<span class="t" style="top:73.80px;font-size:8.6px;line-height:8.6px;color:#2a2aee;font-weight:700;left:107.00px;transform:scaleX(0.8519);transform-origin:0 50%;">Hồ Chí Minh - Hải Phòng</span>
<span class="t" style="top:73.80px;font-size:8.6px;line-height:8.6px;color:#2a2aee;font-weight:700;left:204.00px;transform:scaleX(0.8516);transform-origin:0 50%;">Company Dare Blaze Nexus</span>
<span class="t" style="top:73.80px;font-size:8.6px;line-height:8.6px;color:#2a2aee;font-weight:700;left:482.80px;transform:scaleX(0.8442);transform-origin:0 50%;">GLS Phuc Thai</span>
<span class="t" style="top:73.80px;font-size:8.6px;line-height:8.6px;color:#2a2aee;font-weight:700;left:564.40px;transform:scaleX(0.9101);transform-origin:0 50%;">128N</span>
<span class="t" style="top:73.95px;font-size:9.6px;line-height:9.6px;color:#333;-webkit-text-stroke:0.2px currentColor;left:726.30px;transform:scaleX(0.8140);transform-origin:0 50%;">PT128N-KH</span>
<span class="t" style="top:74.29px;font-size:9.2px;line-height:9.2px;color:#333;-webkit-text-stroke:0.2px currentColor;left:825.40px;transform:scaleX(0.8597);transform-origin:0 50%;">C128NPT:</span>
<span class="t" style="top:73.80px;font-size:8.6px;line-height:8.6px;color:#2a2aee;font-weight:700;left:868.90px;transform:scaleX(1.0113);transform-origin:0 50%;">01/06/2023</span>
<div class="a" style="left:0.00px;top:102.52px;width:909.00px;height:1.00px;background:#e9e9e9;"></div>
<span class="t" style="top:90.67px;font-size:9.9px;line-height:9.9px;color:#2a2a2a;-webkit-text-stroke:0.2px currentColor;left:12.80px;transform:translateX(-50%);">6</span>
<span class="t" style="top:90.87px;font-size:8.6px;line-height:8.6px;color:#2a2aee;font-weight:700;left:44.50px;transform:translateX(-50%) scaleX(0.9507);transform-origin:50% 50%;">6/2023</span>
<span class="t" style="top:90.87px;font-size:8.6px;line-height:8.6px;color:#2a2aee;font-weight:700;left:84.00px;transform:translateX(-50%) scaleX(0.9412);transform-origin:50% 50%;">2023</span>
<span class="t" style="top:90.87px;font-size:8.6px;line-height:8.6px;color:#2a2aee;font-weight:700;left:107.00px;transform:scaleX(0.8519);transform-origin:0 50%;">Hồ Chí Minh - Hải Phòng</span>
<span class="t" style="top:90.87px;font-size:8.6px;line-height:8.6px;color:#2a2aee;font-weight:700;left:204.00px;transform:scaleX(0.8516);transform-origin:0 50%;">Company Dare Blaze Nexus</span>
<span class="t" style="top:90.87px;font-size:8.6px;line-height:8.6px;color:#2a2aee;font-weight:700;left:482.80px;transform:scaleX(0.8442);transform-origin:0 50%;">GLS Phuc Thai</span>
<span class="t" style="top:90.87px;font-size:8.6px;line-height:8.6px;color:#2a2aee;font-weight:700;left:564.40px;transform:scaleX(0.9101);transform-origin:0 50%;">128N</span>
<span class="t" style="top:91.02px;font-size:9.6px;line-height:9.6px;color:#333;-webkit-text-stroke:0.2px currentColor;left:726.30px;transform:scaleX(0.8140);transform-origin:0 50%;">PT128N-KH</span>
<span class="t" style="top:91.36px;font-size:9.2px;line-height:9.2px;color:#333;-webkit-text-stroke:0.2px currentColor;left:825.40px;transform:scaleX(0.8597);transform-origin:0 50%;">C128NPT:</span>
<span class="t" style="top:90.87px;font-size:8.6px;line-height:8.6px;color:#2a2aee;font-weight:700;left:868.90px;transform:scaleX(1.0113);transform-origin:0 50%;">01/06/2023</span>
<div class="a" style="left:0.00px;top:119.59px;width:909.00px;height:1.00px;background:#e9e9e9;"></div>
<span class="t" style="top:107.74px;font-size:9.9px;line-height:9.9px;color:#2a2a2a;-webkit-text-stroke:0.2px currentColor;left:12.80px;transform:translateX(-50%);">7</span>
<span class="t" style="top:107.94px;font-size:8.6px;line-height:8.6px;color:#2a2aee;font-weight:700;left:44.50px;transform:translateX(-50%) scaleX(0.9507);transform-origin:50% 50%;">6/2023</span>
<span class="t" style="top:107.94px;font-size:8.6px;line-height:8.6px;color:#2a2aee;font-weight:700;left:84.00px;transform:translateX(-50%) scaleX(0.9412);transform-origin:50% 50%;">2023</span>
<span class="t" style="top:107.94px;font-size:8.6px;line-height:8.6px;color:#2a2aee;font-weight:700;left:107.00px;transform:scaleX(0.8519);transform-origin:0 50%;">Hồ Chí Minh - Hải Phòng</span>
<span class="t" style="top:107.94px;font-size:8.6px;line-height:8.6px;color:#2a2aee;font-weight:700;left:204.00px;transform:scaleX(0.8516);transform-origin:0 50%;">Company Dare Blaze Nexus</span>
<span class="t" style="top:107.94px;font-size:8.6px;line-height:8.6px;color:#2a2aee;font-weight:700;left:482.80px;transform:scaleX(0.8442);transform-origin:0 50%;">GLS Phuc Thai</span>
<span class="t" style="top:107.94px;font-size:8.6px;line-height:8.6px;color:#2a2aee;font-weight:700;left:564.40px;transform:scaleX(0.9101);transform-origin:0 50%;">128N</span>
<span class="t" style="top:108.09px;font-size:9.6px;line-height:9.6px;color:#333;-webkit-text-stroke:0.2px currentColor;left:726.30px;transform:scaleX(0.8140);transform-origin:0 50%;">PT128N-KH</span>
<span class="t" style="top:108.43px;font-size:9.2px;line-height:9.2px;color:#333;-webkit-text-stroke:0.2px currentColor;left:825.40px;transform:scaleX(0.8597);transform-origin:0 50%;">C128NPT:</span>
<span class="t" style="top:107.94px;font-size:8.6px;line-height:8.6px;color:#2a2aee;font-weight:700;left:868.90px;transform:scaleX(1.0113);transform-origin:0 50%;">01/06/2023</span>
<div class="a" style="left:0.00px;top:136.66px;width:909.00px;height:1.00px;background:#e9e9e9;"></div>
<span class="t" style="top:124.81px;font-size:9.9px;line-height:9.9px;color:#2a2a2a;-webkit-text-stroke:0.2px currentColor;left:12.80px;transform:translateX(-50%);">8</span>
<span class="t" style="top:125.01px;font-size:8.6px;line-height:8.6px;color:#2a2aee;font-weight:700;left:44.50px;transform:translateX(-50%) scaleX(0.9507);transform-origin:50% 50%;">6/2023</span>
<span class="t" style="top:125.01px;font-size:8.6px;line-height:8.6px;color:#2a2aee;font-weight:700;left:84.00px;transform:translateX(-50%) scaleX(0.9412);transform-origin:50% 50%;">2023</span>
<span class="t" style="top:125.01px;font-size:8.6px;line-height:8.6px;color:#2a2aee;font-weight:700;left:107.00px;transform:scaleX(0.8519);transform-origin:0 50%;">Hồ Chí Minh - Hải Phòng</span>
<span class="t" style="top:125.01px;font-size:8.6px;line-height:8.6px;color:#2a2aee;font-weight:700;left:204.00px;transform:scaleX(0.8516);transform-origin:0 50%;">Company Dare Blaze Nexus</span>
<span class="t" style="top:125.01px;font-size:8.6px;line-height:8.6px;color:#2a2aee;font-weight:700;left:482.80px;transform:scaleX(0.8442);transform-origin:0 50%;">GLS Phuc Thai</span>
<span class="t" style="top:125.01px;font-size:8.6px;line-height:8.6px;color:#2a2aee;font-weight:700;left:564.40px;transform:scaleX(0.9101);transform-origin:0 50%;">128N</span>
<span class="t" style="top:125.16px;font-size:9.6px;line-height:9.6px;color:#333;-webkit-text-stroke:0.2px currentColor;left:726.30px;transform:scaleX(0.8140);transform-origin:0 50%;">PT128N-KH</span>
<span class="t" style="top:125.50px;font-size:9.2px;line-height:9.2px;color:#333;-webkit-text-stroke:0.2px currentColor;left:825.40px;transform:scaleX(0.8597);transform-origin:0 50%;">C128NPT:</span>
<span class="t" style="top:125.01px;font-size:8.6px;line-height:8.6px;color:#2a2aee;font-weight:700;left:868.90px;transform:scaleX(1.0113);transform-origin:0 50%;">01/06/2023</span>
<div class="a" style="left:0.00px;top:153.73px;width:909.00px;height:1.00px;background:#e9e9e9;"></div>
<span class="t" style="top:141.88px;font-size:9.9px;line-height:9.9px;color:#2a2a2a;-webkit-text-stroke:0.2px currentColor;left:12.80px;transform:translateX(-50%);">9</span>
<span class="t" style="top:142.08px;font-size:8.6px;line-height:8.6px;color:#2a2aee;font-weight:700;left:44.50px;transform:translateX(-50%) scaleX(0.9507);transform-origin:50% 50%;">6/2023</span>
<span class="t" style="top:142.08px;font-size:8.6px;line-height:8.6px;color:#2a2aee;font-weight:700;left:84.00px;transform:translateX(-50%) scaleX(0.9412);transform-origin:50% 50%;">2023</span>
<span class="t" style="top:142.08px;font-size:8.6px;line-height:8.6px;color:#2a2aee;font-weight:700;left:107.00px;transform:scaleX(0.8519);transform-origin:0 50%;">Hồ Chí Minh - Hải Phòng</span>
<span class="t" style="top:142.08px;font-size:8.6px;line-height:8.6px;color:#2a2aee;font-weight:700;left:204.00px;transform:scaleX(0.8516);transform-origin:0 50%;">Company Dare Blaze Nexus</span>
<span class="t" style="top:142.08px;font-size:8.6px;line-height:8.6px;color:#2a2aee;font-weight:700;left:482.80px;transform:scaleX(0.8442);transform-origin:0 50%;">GLS Phuc Thai</span>
<span class="t" style="top:142.08px;font-size:8.6px;line-height:8.6px;color:#2a2aee;font-weight:700;left:564.40px;transform:scaleX(0.9101);transform-origin:0 50%;">128N</span>
<span class="t" style="top:142.23px;font-size:9.6px;line-height:9.6px;color:#333;-webkit-text-stroke:0.2px currentColor;left:726.30px;transform:scaleX(0.8140);transform-origin:0 50%;">PT128N-KH</span>
<span class="t" style="top:142.57px;font-size:9.2px;line-height:9.2px;color:#333;-webkit-text-stroke:0.2px currentColor;left:825.40px;transform:scaleX(0.8597);transform-origin:0 50%;">C128NPT:</span>
<span class="t" style="top:142.08px;font-size:8.6px;line-height:8.6px;color:#2a2aee;font-weight:700;left:868.90px;transform:scaleX(1.0113);transform-origin:0 50%;">01/06/2023</span>
<div class="a" style="left:0.00px;top:170.80px;width:909.00px;height:1.00px;background:#e9e9e9;"></div>
<span class="t" style="top:158.95px;font-size:9.9px;line-height:9.9px;color:#2a2a2a;-webkit-text-stroke:0.2px currentColor;left:12.80px;transform:translateX(-50%);">10</span>
<span class="t" style="top:159.15px;font-size:8.6px;line-height:8.6px;color:#2a2aee;font-weight:700;left:44.50px;transform:translateX(-50%) scaleX(0.9507);transform-origin:50% 50%;">6/2023</span>
<span class="t" style="top:159.15px;font-size:8.6px;line-height:8.6px;color:#2a2aee;font-weight:700;left:84.00px;transform:translateX(-50%) scaleX(0.9412);transform-origin:50% 50%;">2023</span>
<span class="t" style="top:159.15px;font-size:8.6px;line-height:8.6px;color:#2a2aee;font-weight:700;left:107.00px;transform:scaleX(0.8519);transform-origin:0 50%;">Hồ Chí Minh - Hải Phòng</span>
<span class="t" style="top:159.15px;font-size:8.6px;line-height:8.6px;color:#2a2aee;font-weight:700;left:204.00px;transform:scaleX(0.8516);transform-origin:0 50%;">Company Dare Blaze Nexus</span>
<span class="t" style="top:159.15px;font-size:8.6px;line-height:8.6px;color:#2a2aee;font-weight:700;left:482.80px;transform:scaleX(0.8442);transform-origin:0 50%;">GLS Phuc Thai</span>
<span class="t" style="top:159.15px;font-size:8.6px;line-height:8.6px;color:#2a2aee;font-weight:700;left:564.40px;transform:scaleX(0.9101);transform-origin:0 50%;">128N</span>
<span class="t" style="top:159.30px;font-size:9.6px;line-height:9.6px;color:#333;-webkit-text-stroke:0.2px currentColor;left:726.30px;transform:scaleX(0.8140);transform-origin:0 50%;">PT128N-KH</span>
<span class="t" style="top:159.64px;font-size:9.2px;line-height:9.2px;color:#333;-webkit-text-stroke:0.2px currentColor;left:825.40px;transform:scaleX(0.8597);transform-origin:0 50%;">C128NPT:</span>
<span class="t" style="top:159.15px;font-size:8.6px;line-height:8.6px;color:#2a2aee;font-weight:700;left:868.90px;transform:scaleX(1.0113);transform-origin:0 50%;">01/06/2023</span>
<div class="a" style="left:0.00px;top:187.87px;width:909.00px;height:1.00px;background:#e9e9e9;"></div>
<span class="t" style="top:176.02px;font-size:9.9px;line-height:9.9px;color:#2a2a2a;-webkit-text-stroke:0.2px currentColor;left:12.80px;transform:translateX(-50%);">11</span>
<span class="t" style="top:176.22px;font-size:8.6px;line-height:8.6px;color:#2a2aee;font-weight:700;left:44.50px;transform:translateX(-50%) scaleX(0.9507);transform-origin:50% 50%;">6/2023</span>
<span class="t" style="top:176.22px;font-size:8.6px;line-height:8.6px;color:#2a2aee;font-weight:700;left:84.00px;transform:translateX(-50%) scaleX(0.9412);transform-origin:50% 50%;">2023</span>
<span class="t" style="top:176.22px;font-size:8.6px;line-height:8.6px;color:#2a2aee;font-weight:700;left:107.00px;transform:scaleX(0.8519);transform-origin:0 50%;">Hồ Chí Minh - Hải Phòng</span>
<span class="t" style="top:176.22px;font-size:8.6px;line-height:8.6px;color:#2a2aee;font-weight:700;left:204.00px;transform:scaleX(0.8516);transform-origin:0 50%;">Company Dare Blaze Nexus</span>
<span class="t" style="top:176.22px;font-size:8.6px;line-height:8.6px;color:#2a2aee;font-weight:700;left:482.80px;transform:scaleX(0.8442);transform-origin:0 50%;">GLS Phuc Thai</span>
<span class="t" style="top:176.22px;font-size:8.6px;line-height:8.6px;color:#2a2aee;font-weight:700;left:564.40px;transform:scaleX(0.9101);transform-origin:0 50%;">128N</span>
<span class="t" style="top:176.37px;font-size:9.6px;line-height:9.6px;color:#333;-webkit-text-stroke:0.2px currentColor;left:726.30px;transform:scaleX(0.8140);transform-origin:0 50%;">PT128N-KH</span>
<span class="t" style="top:176.71px;font-size:9.2px;line-height:9.2px;color:#333;-webkit-text-stroke:0.2px currentColor;left:825.40px;transform:scaleX(0.8597);transform-origin:0 50%;">C128NPT:</span>
<span class="t" style="top:176.22px;font-size:8.6px;line-height:8.6px;color:#2a2aee;font-weight:700;left:868.90px;transform:scaleX(1.0113);transform-origin:0 50%;">01/06/2023</span>
<div class="a" style="left:0.00px;top:204.94px;width:909.00px;height:1.00px;background:#e9e9e9;"></div>
<span class="t" style="top:193.09px;font-size:9.9px;line-height:9.9px;color:#2a2a2a;-webkit-text-stroke:0.2px currentColor;left:12.80px;transform:translateX(-50%);">12</span>
<span class="t" style="top:193.29px;font-size:8.6px;line-height:8.6px;color:#2a2aee;font-weight:700;left:44.50px;transform:translateX(-50%) scaleX(0.9507);transform-origin:50% 50%;">6/2023</span>
<span class="t" style="top:193.29px;font-size:8.6px;line-height:8.6px;color:#2a2aee;font-weight:700;left:84.00px;transform:translateX(-50%) scaleX(0.9412);transform-origin:50% 50%;">2023</span>
<span class="t" style="top:193.29px;font-size:8.6px;line-height:8.6px;color:#2a2aee;font-weight:700;left:107.00px;transform:scaleX(0.8519);transform-origin:0 50%;">Hồ Chí Minh - Hải Phòng</span>
<span class="t" style="top:193.29px;font-size:8.6px;line-height:8.6px;color:#2a2aee;font-weight:700;left:204.00px;transform:scaleX(0.8516);transform-origin:0 50%;">Company Dare Blaze Nexus</span>
<span class="t" style="top:193.29px;font-size:8.6px;line-height:8.6px;color:#2a2aee;font-weight:700;left:482.80px;transform:scaleX(0.8442);transform-origin:0 50%;">GLS Phuc Thai</span>
<span class="t" style="top:193.29px;font-size:8.6px;line-height:8.6px;color:#2a2aee;font-weight:700;left:564.40px;transform:scaleX(0.9101);transform-origin:0 50%;">128N</span>
<span class="t" style="top:193.44px;font-size:9.6px;line-height:9.6px;color:#333;-webkit-text-stroke:0.2px currentColor;left:726.30px;transform:scaleX(0.8140);transform-origin:0 50%;">PT128N-KH</span>
<span class="t" style="top:193.78px;font-size:9.2px;line-height:9.2px;color:#333;-webkit-text-stroke:0.2px currentColor;left:825.40px;transform:scaleX(0.8597);transform-origin:0 50%;">C128NPT:</span>
<span class="t" style="top:193.29px;font-size:8.6px;line-height:8.6px;color:#2a2aee;font-weight:700;left:868.90px;transform:scaleX(1.0113);transform-origin:0 50%;">01/06/2023</span>
<div class="a" style="left:0.00px;top:222.01px;width:909.00px;height:1.00px;background:#e9e9e9;"></div>
<span class="t" style="top:210.16px;font-size:9.9px;line-height:9.9px;color:#2a2a2a;-webkit-text-stroke:0.2px currentColor;left:12.80px;transform:translateX(-50%);">13</span>
<span class="t" style="top:210.36px;font-size:8.6px;line-height:8.6px;color:#2a2aee;font-weight:700;left:44.50px;transform:translateX(-50%) scaleX(0.9507);transform-origin:50% 50%;">6/2023</span>
<span class="t" style="top:210.36px;font-size:8.6px;line-height:8.6px;color:#2a2aee;font-weight:700;left:84.00px;transform:translateX(-50%) scaleX(0.9412);transform-origin:50% 50%;">2023</span>
<span class="t" style="top:210.36px;font-size:8.6px;line-height:8.6px;color:#2a2aee;font-weight:700;left:107.00px;transform:scaleX(0.8519);transform-origin:0 50%;">Hồ Chí Minh - Hải Phòng</span>
<span class="t" style="top:210.36px;font-size:8.6px;line-height:8.6px;color:#2a2aee;font-weight:700;left:204.00px;transform:scaleX(0.8516);transform-origin:0 50%;">Company Dare Blaze Nexus</span>
<span class="t" style="top:210.36px;font-size:8.6px;line-height:8.6px;color:#2a2aee;font-weight:700;left:482.80px;transform:scaleX(0.8442);transform-origin:0 50%;">GLS Phuc Thai</span>
<span class="t" style="top:210.36px;font-size:8.6px;line-height:8.6px;color:#2a2aee;font-weight:700;left:564.40px;transform:scaleX(0.9101);transform-origin:0 50%;">128N</span>
<span class="t" style="top:210.51px;font-size:9.6px;line-height:9.6px;color:#333;-webkit-text-stroke:0.2px currentColor;left:726.30px;transform:scaleX(0.8140);transform-origin:0 50%;">PT128N-KH</span>
<span class="t" style="top:210.85px;font-size:9.2px;line-height:9.2px;color:#333;-webkit-text-stroke:0.2px currentColor;left:825.40px;transform:scaleX(0.8597);transform-origin:0 50%;">C128NPT:</span>
<span class="t" style="top:210.36px;font-size:8.6px;line-height:8.6px;color:#2a2aee;font-weight:700;left:868.90px;transform:scaleX(1.0113);transform-origin:0 50%;">01/06/2023</span>
<div class="a" style="left:0.00px;top:239.08px;width:909.00px;height:1.00px;background:#e9e9e9;"></div>
<span class="t" style="top:227.23px;font-size:9.9px;line-height:9.9px;color:#2a2a2a;-webkit-text-stroke:0.2px currentColor;left:12.80px;transform:translateX(-50%);">14</span>
<span class="t" style="top:227.43px;font-size:8.6px;line-height:8.6px;color:#2a2aee;font-weight:700;left:44.50px;transform:translateX(-50%) scaleX(0.9507);transform-origin:50% 50%;">6/2023</span>
<span class="t" style="top:227.43px;font-size:8.6px;line-height:8.6px;color:#2a2aee;font-weight:700;left:84.00px;transform:translateX(-50%) scaleX(0.9412);transform-origin:50% 50%;">2023</span>
<span class="t" style="top:227.43px;font-size:8.6px;line-height:8.6px;color:#2a2aee;font-weight:700;left:107.00px;transform:scaleX(0.8519);transform-origin:0 50%;">Hồ Chí Minh - Hải Phòng</span>
<span class="t" style="top:227.43px;font-size:8.6px;line-height:8.6px;color:#2a2aee;font-weight:700;left:204.00px;transform:scaleX(0.8516);transform-origin:0 50%;">Company Dare Blaze Nexus</span>
<span class="t" style="top:227.43px;font-size:8.6px;line-height:8.6px;color:#2a2aee;font-weight:700;left:482.80px;transform:scaleX(0.8442);transform-origin:0 50%;">GLS Phuc Thai</span>
<span class="t" style="top:227.43px;font-size:8.6px;line-height:8.6px;color:#2a2aee;font-weight:700;left:564.40px;transform:scaleX(0.9101);transform-origin:0 50%;">128N</span>
<span class="t" style="top:227.58px;font-size:9.6px;line-height:9.6px;color:#333;-webkit-text-stroke:0.2px currentColor;left:726.30px;transform:scaleX(0.8140);transform-origin:0 50%;">PT128N-KH</span>
<span class="t" style="top:227.92px;font-size:9.2px;line-height:9.2px;color:#333;-webkit-text-stroke:0.2px currentColor;left:825.40px;transform:scaleX(0.8597);transform-origin:0 50%;">C128NPT:</span>
<span class="t" style="top:227.43px;font-size:8.6px;line-height:8.6px;color:#2a2aee;font-weight:700;left:868.90px;transform:scaleX(1.0113);transform-origin:0 50%;">01/06/2023</span>
<div class="a" style="left:0.00px;top:256.15px;width:909.00px;height:1.00px;background:#e9e9e9;"></div>
<span class="t" style="top:244.30px;font-size:9.9px;line-height:9.9px;color:#2a2a2a;-webkit-text-stroke:0.2px currentColor;left:12.80px;transform:translateX(-50%);">15</span>
<span class="t" style="top:244.50px;font-size:8.6px;line-height:8.6px;color:#2a2aee;font-weight:700;left:44.50px;transform:translateX(-50%) scaleX(0.9507);transform-origin:50% 50%;">6/2023</span>
<span class="t" style="top:244.50px;font-size:8.6px;line-height:8.6px;color:#2a2aee;font-weight:700;left:84.00px;transform:translateX(-50%) scaleX(0.9412);transform-origin:50% 50%;">2023</span>
<span class="t" style="top:244.50px;font-size:8.6px;line-height:8.6px;color:#2a2aee;font-weight:700;left:107.00px;transform:scaleX(0.8519);transform-origin:0 50%;">Hồ Chí Minh - Hải Phòng</span>
<span class="t" style="top:244.50px;font-size:8.6px;line-height:8.6px;color:#2a2aee;font-weight:700;left:204.00px;transform:scaleX(0.8516);transform-origin:0 50%;">Company Dare Blaze Nexus</span>
<span class="t" style="top:244.50px;font-size:8.6px;line-height:8.6px;color:#2a2aee;font-weight:700;left:482.80px;transform:scaleX(0.8442);transform-origin:0 50%;">GLS Phuc Thai</span>
<span class="t" style="top:244.50px;font-size:8.6px;line-height:8.6px;color:#2a2aee;font-weight:700;left:564.40px;transform:scaleX(0.9101);transform-origin:0 50%;">128N</span>
<span class="t" style="top:244.65px;font-size:9.6px;line-height:9.6px;color:#333;-webkit-text-stroke:0.2px currentColor;left:726.30px;transform:scaleX(0.8140);transform-origin:0 50%;">PT128N-KH</span>
<span class="t" style="top:244.99px;font-size:9.2px;line-height:9.2px;color:#333;-webkit-text-stroke:0.2px currentColor;left:825.40px;transform:scaleX(0.8597);transform-origin:0 50%;">C128NPT:</span>
<span class="t" style="top:244.50px;font-size:8.6px;line-height:8.6px;color:#2a2aee;font-weight:700;left:868.90px;transform:scaleX(1.0113);transform-origin:0 50%;">01/06/2023</span>
<div class="a" style="left:0.00px;top:273.22px;width:909.00px;height:1.00px;background:#e9e9e9;"></div>
<span class="t" style="top:261.37px;font-size:9.9px;line-height:9.9px;color:#2a2a2a;-webkit-text-stroke:0.2px currentColor;left:12.80px;transform:translateX(-50%);">16</span>
<span class="t" style="top:261.57px;font-size:8.6px;line-height:8.6px;color:#2a2aee;font-weight:700;left:44.50px;transform:translateX(-50%) scaleX(0.9507);transform-origin:50% 50%;">6/2023</span>
<span class="t" style="top:261.57px;font-size:8.6px;line-height:8.6px;color:#2a2aee;font-weight:700;left:84.00px;transform:translateX(-50%) scaleX(0.9412);transform-origin:50% 50%;">2023</span>
<span class="t" style="top:261.57px;font-size:8.6px;line-height:8.6px;color:#2a2aee;font-weight:700;left:107.00px;transform:scaleX(0.8519);transform-origin:0 50%;">Hồ Chí Minh - Hải Phòng</span>
<span class="t" style="top:261.57px;font-size:8.6px;line-height:8.6px;color:#2a2aee;font-weight:700;left:204.00px;transform:scaleX(0.8516);transform-origin:0 50%;">Company Dare Blaze Nexus</span>
<span class="t" style="top:261.57px;font-size:8.6px;line-height:8.6px;color:#2a2aee;font-weight:700;left:482.80px;transform:scaleX(0.8442);transform-origin:0 50%;">GLS Phuc Thai</span>
<span class="t" style="top:261.57px;font-size:8.6px;line-height:8.6px;color:#2a2aee;font-weight:700;left:564.40px;transform:scaleX(0.9101);transform-origin:0 50%;">128N</span>
<span class="t" style="top:261.72px;font-size:9.6px;line-height:9.6px;color:#333;-webkit-text-stroke:0.2px currentColor;left:726.30px;transform:scaleX(0.8140);transform-origin:0 50%;">PT128N-KH</span>
<span class="t" style="top:262.06px;font-size:9.2px;line-height:9.2px;color:#333;-webkit-text-stroke:0.2px currentColor;left:825.40px;transform:scaleX(0.8597);transform-origin:0 50%;">C128NPT:</span>
<span class="t" style="top:261.57px;font-size:8.6px;line-height:8.6px;color:#2a2aee;font-weight:700;left:868.90px;transform:scaleX(1.0113);transform-origin:0 50%;">01/06/2023</span>
<div class="a" style="left:25.10px;top:0.00px;width:0.80px;height:266.00px;background:#e8e8e8;"></div>
<div class="a" style="left:68.10px;top:0.00px;width:0.80px;height:266.00px;background:#e8e8e8;"></div>
<div class="a" style="left:99.60px;top:0.00px;width:0.80px;height:266.00px;background:#e8e8e8;"></div>
<div class="a" style="left:197.10px;top:0.00px;width:0.80px;height:266.00px;background:#e8e8e8;"></div>
<div class="a" style="left:352.10px;top:0.00px;width:0.80px;height:266.00px;background:#e8e8e8;"></div>
<div class="a" style="left:476.10px;top:0.00px;width:0.80px;height:266.00px;background:#e8e8e8;"></div>
<div class="a" style="left:557.10px;top:0.00px;width:0.80px;height:266.00px;background:#e8e8e8;"></div>
<div class="a" style="left:674.60px;top:0.00px;width:0.80px;height:266.00px;background:#e8e8e8;"></div>
<div class="a" style="left:722.60px;top:0.00px;width:0.80px;height:266.00px;background:#e8e8e8;"></div>
<div class="a" style="left:822.10px;top:0.00px;width:0.80px;height:266.00px;background:#e8e8e8;"></div>
<div class="a" style="left:862.10px;top:0.00px;width:0.80px;height:266.00px;background:#e8e8e8;"></div>
</div>
<div class="a" style="left:916.00px;top:138.00px;width:6.00px;height:292.00px;background:#ececec;"></div>
<div class="a" style="left:916.30px;top:138.30px;width:5.40px;height:5.00px;background:#1a6fc0;border-radius:1px;"></div>
<div class="a" style="left:7.00px;top:430.00px;width:925.00px;height:22.50px;background:#f4f4f4;"></div>
<span class="t" style="top:436.42px;font-size:8.6px;line-height:8.6px;color:#444;font-weight:700;left:10.30px;transform:scaleX(0.8905);transform-origin:0 50%;">Tổng</span>
<div class="a" style="left:7.00px;top:452.50px;width:918.00px;height:6.50px;background:#e6e6e6;border-radius:3px;"></div>
<div class="a" style="left:7.00px;top:452.50px;width:127.30px;height:6.50px;background:#1b6fb9;border-radius:3px;"></div>
<div class="a" style="left:364.6px;top:291.0px;width:659.40px;height:178.50px;overflow:hidden;background:#fff;">
<div class="a" style="left:0.40px;top:0.50px;width:81.80px;height:10.50px;background:#f3f3f3;"></div>
<div class="a" style="left:0.40px;top:10.00px;width:81.80px;height:1.30px;background:#2b3a9a;"></div>
<div class="a" style="left:0.00px;top:11.60px;width:660.00px;height:0.60px;background:#eeeeee;"></div>
<svg class="a" style="left:4.60px;top:3.80px;" width="8" height="5.6" viewBox="0 0 8 5.6"><path d="M0.40 0.40 H5.54 L7.39 2.77 V4.36 H0.40 Z" fill="none" stroke="#555" stroke-width="0.7" stroke-linejoin="round"/><path d="M0.40 2.24 H7.00 M2.44 0.40 V2.24 M4.22 0.40 V2.24" stroke="#555" stroke-width="0.7"/><circle cx="1.98" cy="4.55" r="0.83" fill="#f3f3f3" stroke="#555" stroke-width="0.7"/><circle cx="5.68" cy="4.55" r="0.83" fill="#f3f3f3" stroke="#555" stroke-width="0.7"/></svg>
<span class="t" style="top:4.02px;font-size:6.0px;line-height:6.0px;color:#333;font-weight:700;left:14.00px;transform:scaleX(0.9257);transform-origin:0 50%;">Danh sách vận chuyển</span>
<svg class="a" style="left:89.10px;top:4.30px;transform:scale(0.65);transform-origin:0 0;" width="12" height="8" viewBox="0 0 12 8"><rect x="0.6" y="0.6" width="11" height="6.8" rx="0.4" fill="none" stroke="#555" stroke-width="1.0"/><ellipse cx="6.1" cy="4" rx="1.7" ry="2" fill="none" stroke="#555" stroke-width="1.0"/><path d="M2.2 2 Q2.8 4 2.2 6 M10 2 Q9.4 4 10 6" fill="none" stroke="#555" stroke-width="0.80"/></svg>
<span class="t" style="top:3.94px;font-size:6.1px;line-height:6.1px;color:#444;left:98.80px;transform:scaleX(0.9728);transform-origin:0 50%;">Tất cả chi phí</span>
<svg class="a" style="left:148.40px;top:3.50px;transform:scale(0.65);transform-origin:0 0;" width="12" height="10" viewBox="0 0 12 10"><rect x="0.6" y="2.6" width="11" height="6.8" rx="0.5" fill="none" stroke="#555" stroke-width="1.0"/><path d="M3.2 9.2 L3.2 5 Q3.2 1 5 0.8 L9.6 8.6 M5.4 4.2 L8 9" fill="none" stroke="#555" stroke-width="1.0"/></svg>
<span class="t" style="top:3.94px;font-size:6.1px;line-height:6.1px;color:#444;left:158.60px;transform:scaleX(0.9863);transform-origin:0 50%;">Tất cả phân bổ</span>
<svg class="a" style="left:212.10px;top:3.50px;transform:scale(0.65);transform-origin:0 0;" width="12" height="10" viewBox="0 0 12 10"><rect x="0.6" y="2.6" width="11" height="6.8" rx="0.5" fill="none" stroke="#555" stroke-width="1.0"/><path d="M3.2 9.2 L3.2 5 Q3.2 1 5 0.8 L9.6 8.6 M5.4 4.2 L8 9" fill="none" stroke="#555" stroke-width="1.0"/></svg>
<span class="t" style="top:3.94px;font-size:6.1px;line-height:6.1px;color:#444;left:222.20px;transform:scaleX(1.0039);transform-origin:0 50%;">Tất cả đối chiếu</span>
<svg class="a" style="left:279.90px;top:4.60px;transform:scale(0.65);transform-origin:0 0;" width="10" height="8" viewBox="0 0 10 8"><path d="M0.5 1 h1 M0.5 4 h1 M0.5 7 h1 M3 1 H10 M3 4 H10 M3 7 H10" stroke="#555" stroke-width="0.9"/></svg>
<span class="t" style="top:3.94px;font-size:6.1px;line-height:6.1px;color:#444;left:288.10px;transform:scaleX(0.9533);transform-origin:0 50%;">DS yêu cầu thay đổi</span>
<div class="a" style="left:0.00px;top:16.60px;width:83.00px;height:12.00px;background:#fff;border:0.6px solid #e2e2e2;border-radius:1.5px;box-sizing:border-box;"></div>
<span class="t" style="top:20.76px;font-size:5.6px;line-height:5.6px;color:#666;left:0.80px;transform:scaleX(0.9261);transform-origin:0 50%;">Tìm kiếm</span>
<div class="a" style="left:88.40px;top:16.60px;width:54.30px;height:12.00px;background:#fff;border:0.6px solid #e2e2e2;border-radius:1.5px;box-sizing:border-box;"></div>
<span class="t" style="top:20.76px;font-size:5.6px;line-height:5.6px;color:#666;left:90.70px;transform:scaleX(0.8869);transform-origin:0 50%;">Từ ngày</span>
<svg class="a" style="left:134.50px;top:18.20px;transform:scale(0.7);transform-origin:0 0;" width="11" height="12" viewBox="0 0 11 12"><rect x="0.6" y="2" width="10" height="9.5" rx="1.2" fill="none" stroke="#5b80cf" stroke-width="1.0"/><line x1="0.6" y1="4.8" x2="10.6" y2="4.8" stroke="#5b80cf" stroke-width="1.0"/><line x1="3" y1="0.5" x2="3" y2="3" stroke="#5b80cf" stroke-width="1.0"/><line x1="8" y1="0.5" x2="8" y2="3" stroke="#5b80cf" stroke-width="1.0"/></svg>
<div class="a" style="left:147.00px;top:16.60px;width:53.90px;height:12.00px;background:#fff;border:0.6px solid #e2e2e2;border-radius:1.5px;box-sizing:border-box;"></div>
<span class="t" style="top:20.76px;font-size:5.6px;line-height:5.6px;color:#666;left:149.00px;transform:scaleX(0.9185);transform-origin:0 50%;">Đến ngày</span>
<svg class="a" style="left:192.70px;top:18.20px;transform:scale(0.7);transform-origin:0 0;" width="11" height="12" viewBox="0 0 11 12"><rect x="0.6" y="2" width="10" height="9.5" rx="1.2" fill="none" stroke="#5b80cf" stroke-width="1.0"/><line x1="0.6" y1="4.8" x2="10.6" y2="4.8" stroke="#5b80cf" stroke-width="1.0"/><line x1="3" y1="0.5" x2="3" y2="3" stroke="#5b80cf" stroke-width="1.0"/><line x1="8" y1="0.5" x2="8" y2="3" stroke="#5b80cf" stroke-width="1.0"/></svg>
<div class="a" style="left:207.40px;top:16.30px;width:15.70px;height:11.80px;background:#1173bc;border-radius:1.5px;"></div>
<div class="a" style="left:225.80px;top:16.30px;width:14.50px;height:11.80px;background:#1173bc;border-radius:1.5px;"></div>
<div class="a" style="left:243.00px;top:16.30px;width:21.90px;height:11.80px;background:#1173bc;border-radius:1.5px;"></div>
<div class="a" style="left:267.60px;top:16.30px;width:15.60px;height:11.80px;background:#1173bc;border-radius:1.5px;"></div>
<div class="a" style="left:286.40px;top:16.30px;width:16.50px;height:11.80px;background:#1173bc;border-radius:1.5px;"></div>
<div class="a" style="left:305.60px;top:16.30px;width:15.90px;height:11.80px;background:#1173bc;border-radius:1.5px;"></div>
<svg class="a" style="left:212.25px;top:18.80px;transform:scale(0.66);transform-origin:0 0;" width="9" height="9" viewBox="0 0 9 9"><circle cx="4" cy="4" r="3.2" fill="none" stroke="#fff" stroke-width="1.3"/><line x1="6.4" y1="6.4" x2="8.6" y2="8.6" stroke="#fff" stroke-width="1.3" stroke-linecap="round"/></svg>
<svg class="a" style="left:230.45px;top:18.80px;transform:scale(0.66);transform-origin:0 0;" width="8" height="9" viewBox="0 0 8 9"><rect x="0.5" y="1.5" width="7" height="7" rx="0.8" fill="none" stroke="#fff" stroke-width="1.2"/><path d="M0.5 4 H7.5 M2 0.3 V2.2 M6 0.3 V2.2" stroke="#fff" stroke-width="1.2"/></svg>
<svg class="a" style="left:246.20px;top:19.60px;transform:scale(0.66);transform-origin:0 0;" width="17" height="8" viewBox="0 0 17 8"><circle cx="4" cy="4" r="3.2" fill="none" stroke="#fff" stroke-width="1.2"/><polyline points="10,2.5 12.6,5.2 15.2,2.5" fill="none" stroke="#fff" stroke-width="1.3"/></svg>
<svg class="a" style="left:272.70px;top:19.30px;transform:scale(0.66);transform-origin:0 0;" width="8.5" height="8.5" viewBox="0 0 8.5 8.5"><path d="M1.5 1 V3.3 H3.8" fill="none" stroke="#fff" stroke-width="1.3"/><path d="M1.7 3.2 A3.3 3.3 0 1 1 2.4 7" fill="none" stroke="#fff" stroke-width="1.3"/></svg>
<svg class="a" style="left:291.35px;top:19.60px;transform:scale(0.66);transform-origin:0 0;" width="10" height="8" viewBox="0 0 10 8"><path d="M2 0.5 V6 H9.5 M0.3 2 H8 V7.5" fill="none" stroke="#fff" stroke-width="1.3"/></svg>
<svg class="a" style="left:310.95px;top:19.80px;transform:scale(0.66);transform-origin:0 0;" width="8" height="7" viewBox="0 0 8 7"><path d="M3 0.5 L0.6 3.5 L3 6.5 M5 0.5 L7.4 3.5 L5 6.5" fill="none" stroke="#fff" stroke-width="1.2"/></svg>
<div class="a" style="left:328.10px;top:16.30px;width:16.54px;height:11.50px;background:#f7f7f7;border:0.6px solid #e3e3e3;border-radius:1.5px;box-sizing:border-box;"></div>
<span class="t" style="top:20.37px;font-size:5.7px;line-height:5.7px;color:#555;left:336.37px;transform:translateX(-50%);">F1</span>
<div class="a" style="left:346.79px;top:16.30px;width:16.60px;height:11.50px;background:#f7f7f7;border:0.6px solid #e3e3e3;border-radius:1.5px;box-sizing:border-box;"></div>
<span class="t" style="top:20.37px;font-size:5.7px;line-height:5.7px;color:#555;left:355.09px;transform:translateX(-50%);">F2</span>
<div class="a" style="left:365.47px;top:16.30px;width:16.60px;height:11.50px;background:#f7f7f7;border:0.6px solid #e3e3e3;border-radius:1.5px;box-sizing:border-box;"></div>
<span class="t" style="top:20.37px;font-size:5.7px;line-height:5.7px;color:#555;left:373.77px;transform:translateX(-50%);">F3</span>
<div class="a" style="left:384.22px;top:16.30px;width:16.54px;height:11.50px;background:#f7f7f7;border:0.6px solid #e3e3e3;border-radius:1.5px;box-sizing:border-box;"></div>
<span class="t" style="top:20.37px;font-size:5.7px;line-height:5.7px;color:#555;left:392.49px;transform:translateX(-50%);">F4</span>
<div class="a" style="left:402.90px;top:16.30px;width:16.54px;height:11.50px;background:#f7f7f7;border:0.6px solid #e3e3e3;border-radius:1.5px;box-sizing:border-box;"></div>
<span class="t" style="top:20.37px;font-size:5.7px;line-height:5.7px;color:#555;left:411.17px;transform:translateX(-50%);">F6</span>
<div class="a" style="left:421.59px;top:16.30px;width:16.54px;height:11.50px;background:#f7f7f7;border:0.6px solid #e3e3e3;border-radius:1.5px;box-sizing:border-box;"></div>
<span class="t" style="top:20.37px;font-size:5.7px;line-height:5.7px;color:#555;left:429.86px;transform:translateX(-50%);">F8</span>
<div class="a" style="left:440.27px;top:16.30px;width:16.54px;height:11.50px;background:#f7f7f7;border:0.6px solid #e3e3e3;border-radius:1.5px;box-sizing:border-box;"></div>
<span class="t" style="top:20.37px;font-size:5.7px;line-height:5.7px;color:#555;left:448.54px;transform:translateX(-50%);">F9</span>
<div class="a" style="left:459.15px;top:16.30px;width:19.01px;height:11.50px;background:#f7f7f7;border:0.6px solid #e3e3e3;border-radius:1.5px;box-sizing:border-box;"></div>
<span class="t" style="top:20.37px;font-size:5.7px;line-height:5.7px;color:#555;left:468.65px;transform:translateX(-50%);">F10</span>
<div class="a" style="left:480.44px;top:16.30px;width:19.99px;height:11.50px;background:#f7f7f7;border:0.6px solid #e3e3e3;border-radius:1.5px;box-sizing:border-box;"></div>
<span class="t" style="top:20.37px;font-size:5.7px;line-height:5.7px;color:#555;left:490.43px;transform:translateX(-50%);">F11</span>
<div class="a" style="left:0.00px;top:31.20px;width:660.00px;height:16.60px;background:#039687;"></div>
<div class="a" style="left:14.70px;top:31.20px;width:0.60px;height:16.60px;background:rgba(255,255,255,0.5);"></div>
<div class="a" style="left:96.40px;top:31.20px;width:0.60px;height:16.60px;background:rgba(255,255,255,0.5);"></div>
<div class="a" style="left:175.90px;top:31.20px;width:0.60px;height:16.60px;background:rgba(255,255,255,0.5);"></div>
<div class="a" style="left:251.40px;top:31.20px;width:0.60px;height:16.60px;background:rgba(255,255,255,0.5);"></div>
<div class="a" style="left:335.90px;top:31.20px;width:0.60px;height:16.60px;background:rgba(255,255,255,0.5);"></div>
<div class="a" style="left:413.80px;top:31.20px;width:0.60px;height:16.60px;background:rgba(255,255,255,0.5);"></div>
<div class="a" style="left:452.30px;top:31.20px;width:0.60px;height:16.60px;background:rgba(255,255,255,0.5);"></div>
<div class="a" style="left:494.70px;top:31.20px;width:0.60px;height:16.60px;background:rgba(255,255,255,0.5);"></div>
<div class="a" style="left:544.60px;top:31.20px;width:0.60px;height:16.60px;background:rgba(255,255,255,0.5);"></div>
<div class="a" style="left:594.10px;top:31.20px;width:0.60px;height:16.60px;background:rgba(255,255,255,0.5);"></div>
<div class="a" style="left:652.90px;top:31.20px;width:0.60px;height:16.60px;background:rgba(255,255,255,0.5);"></div>
<svg class="a" style="left:3.00px;top:35.30px;transform:scale(0.7);transform-origin:0 0;" width="11" height="10" viewBox="0 0 11 10"><path d="M6 1.2 H1.8 Q0.8 1.2 0.8 2.2 V8.6 Q0.8 9.4 1.8 9.4 H8 Q9 9.4 9 8.4 V5" fill="none" stroke="#e6f5f2" stroke-width="1.2"/><path d="M3.5 7 L4 5 L8.8 0.6 L10.4 2.2 L5.6 6.6 Z" fill="none" stroke="#e6f5f2" stroke-width="1.2" stroke-linejoin="round"/></svg>
<span class="t" style="top:36.65px;font-size:6.2px;line-height:6.2px;color:#fff;left:52.30px;transform:translateX(-50%) scaleX(0.9719);transform-origin:50% 50%;">Tách bill</span>
<span class="t" style="top:36.65px;font-size:6.2px;line-height:6.2px;color:#fff;left:136.40px;transform:translateX(-50%) scaleX(0.9616);transform-origin:50% 50%;">Rỗng kết hợp</span>
<span class="t" style="top:36.65px;font-size:6.2px;line-height:6.2px;color:#fff;left:214.20px;transform:translateX(-50%) scaleX(0.9915);transform-origin:50% 50%;">Nguồn rỗng kết hợp</span>
<span class="t" style="top:36.65px;font-size:6.2px;line-height:6.2px;color:#fff;left:375.10px;transform:translateX(-50%) scaleX(0.9814);transform-origin:50% 50%;">Loại Container</span>
<span class="t" style="top:36.65px;font-size:6.2px;line-height:6.2px;color:#fff;left:433.30px;transform:translateX(-50%) scaleX(0.9531);transform-origin:50% 50%;">Số cont</span>
<span class="t" style="top:36.65px;font-size:6.2px;line-height:6.2px;color:#fff;left:474.10px;transform:translateX(-50%) scaleX(0.9690);transform-origin:50% 50%;">Số seal</span>
<span class="t" style="top:36.65px;font-size:6.2px;line-height:6.2px;color:#fff;left:520.10px;transform:translateX(-50%) scaleX(0.9686);transform-origin:50% 50%;">Chủ hàng</span>
<span class="t" style="top:36.65px;font-size:6.2px;line-height:6.2px;color:#fff;left:569.80px;transform:translateX(-50%) scaleX(0.9502);transform-origin:50% 50%;">Mã chủ hàng</span>
<span class="t" style="top:36.65px;font-size:6.2px;line-height:6.2px;color:#fff;left:624.20px;transform:translateX(-50%) scaleX(0.9749);transform-origin:50% 50%;">Nhân viên bán hàng</span>
<span class="t" style="top:32.95px;font-size:6.2px;line-height:6.2px;color:#fff;left:293.90px;transform:translateX(-50%) scaleX(0.9797);transform-origin:50% 50%;">Đóng KH</span>
<span class="t" style="top:40.25px;font-size:6.2px;line-height:6.2px;color:#fff;left:293.80px;transform:translateX(-50%) scaleX(0.9948);transform-origin:50% 50%;">(trong ngày)</span>
<div class="a" style="left:0.00px;top:48.00px;width:660.00px;height:11.68px;background:#d3f6cc;"></div>
<div class="a" style="left:0.00px;top:58.88px;width:660.00px;height:0.60px;background:#e8e8e8;"></div>
<span class="t" style="top:51.27px;font-size:7.0px;line-height:7.0px;color:#2a2a2a;-webkit-text-stroke:0.2px currentColor;left:2.70px;transform:scaleX(0.8850);transform-origin:0 50%;">70</span>
<div class="a" style="left:0.00px;top:70.06px;width:660.00px;height:0.60px;background:#e8e8e8;"></div>
<span class="t" style="top:62.45px;font-size:7.0px;line-height:7.0px;color:#2a2a2a;-webkit-text-stroke:0.2px currentColor;left:2.70px;transform:scaleX(0.8850);transform-origin:0 50%;">71</span>
<div class="a" style="left:0.00px;top:81.24px;width:660.00px;height:0.60px;background:#e8e8e8;"></div>
<span class="t" style="top:73.63px;font-size:7.0px;line-height:7.0px;color:#2a2a2a;-webkit-text-stroke:0.2px currentColor;left:2.70px;transform:scaleX(0.8850);transform-origin:0 50%;">72</span>
<div class="a" style="left:0.00px;top:92.42px;width:660.00px;height:0.60px;background:#e8e8e8;"></div>
<span class="t" style="top:84.81px;font-size:7.0px;line-height:7.0px;color:#2a2a2a;-webkit-text-stroke:0.2px currentColor;left:2.70px;transform:scaleX(0.8850);transform-origin:0 50%;">73</span>
<div class="a" style="left:0.00px;top:103.60px;width:660.00px;height:0.60px;background:#e8e8e8;"></div>
<span class="t" style="top:95.99px;font-size:7.0px;line-height:7.0px;color:#2a2a2a;-webkit-text-stroke:0.2px currentColor;left:2.70px;transform:scaleX(0.8850);transform-origin:0 50%;">74</span>
<div class="a" style="left:0.00px;top:114.78px;width:660.00px;height:0.60px;background:#e8e8e8;"></div>
<span class="t" style="top:107.17px;font-size:7.0px;line-height:7.0px;color:#2a2a2a;-webkit-text-stroke:0.2px currentColor;left:2.70px;transform:scaleX(0.8850);transform-origin:0 50%;">75</span>
<div class="a" style="left:0.00px;top:125.96px;width:660.00px;height:0.60px;background:#e8e8e8;"></div>
<span class="t" style="top:118.35px;font-size:7.0px;line-height:7.0px;color:#2a2a2a;-webkit-text-stroke:0.2px currentColor;left:2.70px;transform:scaleX(0.8850);transform-origin:0 50%;">76</span>
<div class="a" style="left:0.00px;top:137.14px;width:660.00px;height:0.60px;background:#e8e8e8;"></div>
<span class="t" style="top:129.53px;font-size:7.0px;line-height:7.0px;color:#2a2a2a;-webkit-text-stroke:0.2px currentColor;left:2.70px;transform:scaleX(0.8850);transform-origin:0 50%;">77</span>
<div class="a" style="left:0.00px;top:148.32px;width:660.00px;height:0.60px;background:#e8e8e8;"></div>
<span class="t" style="top:140.71px;font-size:7.0px;line-height:7.0px;color:#2a2a2a;-webkit-text-stroke:0.2px currentColor;left:2.70px;transform:scaleX(0.8850);transform-origin:0 50%;">78</span>
<div class="a" style="left:0.00px;top:159.50px;width:660.00px;height:0.60px;background:#e8e8e8;"></div>
<span class="t" style="top:151.89px;font-size:7.0px;line-height:7.0px;color:#2a2a2a;-webkit-text-stroke:0.2px currentColor;left:2.70px;transform:scaleX(0.8850);transform-origin:0 50%;">79</span>
<div class="a" style="left:0.00px;top:170.68px;width:660.00px;height:0.60px;background:#e8e8e8;"></div>
<span class="t" style="top:163.07px;font-size:7.0px;line-height:7.0px;color:#2a2a2a;-webkit-text-stroke:0.2px currentColor;left:2.70px;transform:scaleX(0.8850);transform-origin:0 50%;">80</span>
<div class="a" style="left:0.00px;top:181.86px;width:660.00px;height:0.60px;background:#e8e8e8;"></div>
<span class="t" style="top:174.25px;font-size:7.0px;line-height:7.0px;color:#2a2a2a;-webkit-text-stroke:0.2px currentColor;left:2.70px;transform:scaleX(0.8850);transform-origin:0 50%;">81</span>
<div class="a" style="left:14.70px;top:47.80px;width:0.60px;height:200.00px;background:#ececec;"></div>
<div class="a" style="left:96.40px;top:47.80px;width:0.60px;height:200.00px;background:#ececec;"></div>
<div class="a" style="left:175.90px;top:47.80px;width:0.60px;height:200.00px;background:#ececec;"></div>
<div class="a" style="left:251.40px;top:47.80px;width:0.60px;height:200.00px;background:#ececec;"></div>
<div class="a" style="left:335.90px;top:47.80px;width:0.60px;height:200.00px;background:#ececec;"></div>
<div class="a" style="left:413.80px;top:47.80px;width:0.60px;height:200.00px;background:#ececec;"></div>
<div class="a" style="left:452.30px;top:47.80px;width:0.60px;height:200.00px;background:#ececec;"></div>
<div class="a" style="left:494.70px;top:47.80px;width:0.60px;height:200.00px;background:#ececec;"></div>
<div class="a" style="left:544.60px;top:47.80px;width:0.60px;height:200.00px;background:#ececec;"></div>
<div class="a" style="left:594.10px;top:47.80px;width:0.60px;height:200.00px;background:#ececec;"></div>
<div class="a" style="left:652.90px;top:47.80px;width:0.60px;height:200.00px;background:#ececec;"></div>
<div class="a" style="left:134.80px;top:50.80px;width:7.20px;height:7.00px;background:#fff;border:0.7px solid #9bb6d6;border-radius:1.6px;box-sizing:border-box;"></div>
<div class="a" style="left:176.40px;top:48.20px;width:75.50px;height:11.60px;background:#6ee46b;"></div>
<span class="t" style="top:51.62px;font-size:6.0px;line-height:6.0px;color:#1a1a1a;font-weight:700;left:178.20px;transform:scaleX(0.8522);transform-origin:0 50%;">Company Impact Connect Ob</span>
<div class="a" style="left:292.00px;top:50.80px;width:7.20px;height:7.00px;background:#fff;border:0.7px solid #9bb6d6;border-radius:1.6px;box-sizing:border-box;"></div>
<span class="t" style="top:51.62px;font-size:6.0px;line-height:6.0px;color:#222;-webkit-text-stroke:0.12px currentColor;left:337.80px;transform:scaleX(0.9136);transform-origin:0 50%;">Cont 20</span>
<span class="t" style="top:51.62px;font-size:6.0px;line-height:6.0px;color:#2a2aee;font-weight:700;left:418.40px;transform:scaleX(0.8353);transform-origin:0 50%;">CAAU2137542</span>
<span class="t" style="top:51.62px;font-size:6.0px;line-height:6.0px;color:#222;-webkit-text-stroke:0.12px currentColor;left:455.20px;transform:scaleX(0.8239);transform-origin:0 50%;">18795865</span>
<span class="t" style="top:51.62px;font-size:6.0px;line-height:6.0px;color:#2a2aee;font-weight:700;left:499.20px;transform:scaleX(0.7752);transform-origin:0 50%;">Company Wave B...</span>
<span class="t" style="top:51.62px;font-size:6.0px;line-height:6.0px;color:#2a2aee;font-weight:700;left:548.80px;transform:scaleX(0.8564);transform-origin:0 50%;">VVH0058</span>
<span class="t" style="top:51.62px;font-size:6.0px;line-height:6.0px;color:#2a2aee;font-weight:700;left:598.70px;transform:scaleX(0.7907);transform-origin:0 50%;">Aspire Source Ocean</span>
<span class="t" style="top:51.62px;font-size:6.0px;line-height:6.0px;color:#2a2aee;font-weight:700;left:655.60px;">A</span>
<span class="t" style="top:129.91px;font-size:6.2px;line-height:6.2px;color:#222;-webkit-text-stroke:0.12px currentColor;left:178.20px;transform:scaleX(0.8514);transform-origin:0 50%;">Company Force Core Pulse</span>
<div class="a" style="left:134.80px;top:128.46px;width:7.20px;height:7.00px;background:#fff;border:0.7px solid #9bb6d6;border-radius:1.6px;box-sizing:border-box;"></div>
<div class="a" style="left:136.70px;top:130.26px;width:3.40px;height:3.40px;background:#1d6fc4;"></div>
<div class="a" style="left:292.00px;top:128.46px;width:7.20px;height:7.00px;background:#fff;border:0.7px solid #9bb6d6;border-radius:1.6px;box-sizing:border-box;"></div>
<span class="t" style="top:130.08px;font-size:6.0px;line-height:6.0px;color:#222;-webkit-text-stroke:0.12px currentColor;left:337.60px;transform:scaleX(0.9136);transform-origin:0 50%;">Cont 20</span>
<span class="t" style="top:130.08px;font-size:6.0px;line-height:6.0px;color:#2a2aee;font-weight:700;left:418.30px;transform:scaleX(0.8677);transform-origin:0 50%;">CAIU3630875</span>
<span class="t" style="top:130.08px;font-size:6.0px;line-height:6.0px;color:#222;-webkit-text-stroke:0.12px currentColor;left:455.00px;transform:scaleX(0.8239);transform-origin:0 50%;">17763610</span>
<span class="t" style="top:130.08px;font-size:6.0px;line-height:6.0px;color:#2a2aee;font-weight:700;left:499.20px;transform:scaleX(0.7910);transform-origin:0 50%;">Company Blaze F...</span>
<span class="t" style="top:130.08px;font-size:6.0px;line-height:6.0px;color:#2a2aee;font-weight:700;left:549.30px;transform:scaleX(0.8543);transform-origin:0 50%;">PNDT0111</span>
<span class="t" style="top:130.08px;font-size:6.0px;line-height:6.0px;color:#2a2aee;font-weight:700;left:598.90px;transform:scaleX(0.7906);transform-origin:0 50%;">Cloud Quantum Edge</span>
<span class="t" style="top:130.08px;font-size:6.0px;line-height:6.0px;color:#2a2aee;font-weight:700;left:655.60px;">C</span>
<span class="t" style="top:141.09px;font-size:6.2px;line-height:6.2px;color:#222;-webkit-text-stroke:0.12px currentColor;left:178.20px;transform:scaleX(0.8799);transform-origin:0 50%;">Company Impact Connect ...</span>
<div class="a" style="left:134.80px;top:139.64px;width:7.20px;height:7.00px;background:#fff;border:0.7px solid #9bb6d6;border-radius:1.6px;box-sizing:border-box;"></div>
<div class="a" style="left:292.00px;top:139.64px;width:7.20px;height:7.00px;background:#fff;border:0.7px solid #9bb6d6;border-radius:1.6px;box-sizing:border-box;"></div>
<div class="a" style="left:293.90px;top:141.44px;width:3.40px;height:3.40px;background:#1d6fc4;"></div>
<span class="t" style="top:141.26px;font-size:6.0px;line-height:6.0px;color:#222;-webkit-text-stroke:0.12px currentColor;left:337.60px;transform:scaleX(0.9136);transform-origin:0 50%;">Cont 20</span>
<span class="t" style="top:141.26px;font-size:6.0px;line-height:6.0px;color:#2a2aee;font-weight:700;left:418.30px;transform:scaleX(0.8221);transform-origin:0 50%;">DRYU3044704</span>
<span class="t" style="top:141.26px;font-size:6.0px;line-height:6.0px;color:#222;-webkit-text-stroke:0.12px currentColor;left:455.00px;transform:scaleX(0.8240);transform-origin:0 50%;">00577</span>
<span class="t" style="top:141.26px;font-size:6.0px;line-height:6.0px;color:#2a2aee;font-weight:700;left:499.20px;transform:scaleX(0.7632);transform-origin:0 50%;">Company Edge Bl...</span>
<span class="t" style="top:141.26px;font-size:6.0px;line-height:6.0px;color:#2a2aee;font-weight:700;left:549.30px;transform:scaleX(0.8557);transform-origin:0 50%;">NVT0008</span>
<span class="t" style="top:141.26px;font-size:6.0px;line-height:6.0px;color:#2a2aee;font-weight:700;left:598.90px;transform:scaleX(0.7882);transform-origin:0 50%;">Link Cloud Peak</span>
<span class="t" style="top:141.26px;font-size:6.0px;line-height:6.0px;color:#2a2aee;font-weight:700;left:655.60px;">L</span>
<span class="t" style="top:152.27px;font-size:6.2px;line-height:6.2px;color:#222;-webkit-text-stroke:0.12px currentColor;left:178.20px;transform:scaleX(0.8799);transform-origin:0 50%;">Company Impact Connect ...</span>
<div class="a" style="left:134.80px;top:150.82px;width:7.20px;height:7.00px;background:#fff;border:0.7px solid #9bb6d6;border-radius:1.6px;box-sizing:border-box;"></div>
<div class="a" style="left:292.00px;top:150.82px;width:7.20px;height:7.00px;background:#fff;border:0.7px solid #9bb6d6;border-radius:1.6px;box-sizing:border-box;"></div>
<div class="a" style="left:293.90px;top:152.62px;width:3.40px;height:3.40px;background:#1d6fc4;"></div>
<span class="t" style="top:152.44px;font-size:6.0px;line-height:6.0px;color:#222;-webkit-text-stroke:0.12px currentColor;left:337.60px;transform:scaleX(0.9136);transform-origin:0 50%;">Cont 20</span>
<span class="t" style="top:152.44px;font-size:6.0px;line-height:6.0px;color:#2a2aee;font-weight:700;left:418.30px;transform:scaleX(0.7979);transform-origin:0 50%;">GAOU2132244</span>
<span class="t" style="top:152.44px;font-size:6.0px;line-height:6.0px;color:#222;-webkit-text-stroke:0.12px currentColor;left:455.00px;transform:scaleX(0.8240);transform-origin:0 50%;">00315</span>
<span class="t" style="top:152.44px;font-size:6.0px;line-height:6.0px;color:#2a2aee;font-weight:700;left:499.20px;transform:scaleX(0.7816);transform-origin:0 50%;">Company Impact ...</span>
<span class="t" style="top:152.44px;font-size:6.0px;line-height:6.0px;color:#2a2aee;font-weight:700;left:549.30px;transform:scaleX(0.8557);transform-origin:0 50%;">NVT0086</span>
<span class="t" style="top:152.44px;font-size:6.0px;line-height:6.0px;color:#2a2aee;font-weight:700;left:598.90px;transform:scaleX(0.7882);transform-origin:0 50%;">Link Cloud Peak</span>
<span class="t" style="top:152.44px;font-size:6.0px;line-height:6.0px;color:#2a2aee;font-weight:700;left:655.60px;">L</span>
<span class="t" style="top:163.45px;font-size:6.2px;line-height:6.2px;color:#222;-webkit-text-stroke:0.12px currentColor;left:178.20px;transform:scaleX(0.8622);transform-origin:0 50%;">Company Edge Bright Lege...</span>
<div class="a" style="left:134.80px;top:162.00px;width:7.20px;height:7.00px;background:#fff;border:0.7px solid #9bb6d6;border-radius:1.6px;box-sizing:border-box;"></div>
<div class="a" style="left:292.00px;top:162.00px;width:7.20px;height:7.00px;background:#fff;border:0.7px solid #9bb6d6;border-radius:1.6px;box-sizing:border-box;"></div>
<div class="a" style="left:293.90px;top:163.80px;width:3.40px;height:3.40px;background:#1d6fc4;"></div>
<span class="t" style="top:163.62px;font-size:6.0px;line-height:6.0px;color:#222;-webkit-text-stroke:0.12px currentColor;left:337.60px;transform:scaleX(0.9136);transform-origin:0 50%;">Cont 20</span>
<span class="t" style="top:163.62px;font-size:6.0px;line-height:6.0px;color:#2a2aee;font-weight:700;left:418.30px;transform:scaleX(0.8335);transform-origin:0 50%;">PASU2017970</span>
<span class="t" style="top:163.62px;font-size:6.0px;line-height:6.0px;color:#222;-webkit-text-stroke:0.12px currentColor;left:455.00px;transform:scaleX(0.8237);transform-origin:0 50%;">722069</span>
<span class="t" style="top:163.62px;font-size:6.0px;line-height:6.0px;color:#2a2aee;font-weight:700;left:499.20px;transform:scaleX(0.7961);transform-origin:0 50%;">Company Journe...</span>
<span class="t" style="top:163.62px;font-size:6.0px;line-height:6.0px;color:#2a2aee;font-weight:700;left:549.30px;transform:scaleX(0.8763);transform-origin:0 50%;">D0067</span>
<span class="t" style="top:163.62px;font-size:6.0px;line-height:6.0px;color:#2a2aee;font-weight:700;left:598.90px;transform:scaleX(0.7864);transform-origin:0 50%;">Empower Rise Odyssey</span>
<span class="t" style="top:163.62px;font-size:6.0px;line-height:6.0px;color:#2a2aee;font-weight:700;left:655.60px;">E</span>
<span class="t" style="top:174.63px;font-size:6.2px;line-height:6.2px;color:#222;-webkit-text-stroke:0.12px currentColor;left:178.20px;transform:scaleX(0.8624);transform-origin:0 50%;">Company Empower Core Li...</span>
<div class="a" style="left:134.80px;top:173.18px;width:7.20px;height:7.00px;background:#fff;border:0.7px solid #9bb6d6;border-radius:1.6px;box-sizing:border-box;"></div>
<div class="a" style="left:136.70px;top:174.98px;width:3.40px;height:3.40px;background:#1d6fc4;"></div>
<div class="a" style="left:292.00px;top:173.18px;width:7.20px;height:7.00px;background:#fff;border:0.7px solid #9bb6d6;border-radius:1.6px;box-sizing:border-box;"></div>
<span class="t" style="top:174.80px;font-size:6.0px;line-height:6.0px;color:#222;-webkit-text-stroke:0.12px currentColor;left:337.60px;transform:scaleX(0.9136);transform-origin:0 50%;">Cont 20</span>
<span class="t" style="top:174.80px;font-size:6.0px;line-height:6.0px;color:#2a2aee;font-weight:700;left:418.30px;transform:scaleX(0.8221);transform-origin:0 50%;">DRYU3088765</span>
<span class="t" style="top:174.80px;font-size:6.0px;line-height:6.0px;color:#222;-webkit-text-stroke:0.12px currentColor;left:455.00px;transform:scaleX(0.8237);transform-origin:0 50%;">184531</span>
<span class="t" style="top:174.80px;font-size:6.0px;line-height:6.0px;color:#2a2aee;font-weight:700;left:499.20px;transform:scaleX(0.8059);transform-origin:0 50%;">Company Revise...</span>
<span class="t" style="top:174.80px;font-size:6.0px;line-height:6.0px;color:#2a2aee;font-weight:700;left:549.30px;transform:scaleX(0.8675);transform-origin:0 50%;">NTL0017</span>
<span class="t" style="top:174.80px;font-size:6.0px;line-height:6.0px;color:#2a2aee;font-weight:700;left:598.90px;transform:scaleX(0.8061);transform-origin:0 50%;">Quantum Peak Leap</span>
<span class="t" style="top:174.80px;font-size:6.0px;line-height:6.0px;color:#2a2aee;font-weight:700;left:655.60px;">Q</span>
<svg class="a" style="left:156.90px;top:48.50px;" width="19" height="10.5" viewBox="0 0 19 10.5"><line x1="0" y1="5.2" x2="10" y2="5.2" stroke="#e8141c" stroke-width="1.6"/><polygon points="8.5,0 19,5.2 8.5,10.5" fill="#e8141c"/></svg>
<div class="a" style="left:175.60px;top:30.20px;width:76.80px;height:30.20px;border:1.8px solid #f0161a;box-sizing:border-box;"></div>
<div class="a" style="left:81.20px;top:122.40px;width:662.00px;height:7.50px;background:linear-gradient(#9a9a9a,#c8c8c8 45%,rgba(230,230,230,0.6) 75%,rgba(255,255,255,0));"></div>
<div class="a" style="left:83.20px;top:60.40px;width:660.00px;height:63.00px;background:#fff;"></div>
<div class="a" style="left:83.20px;top:60.40px;width:660.00px;height:15.60px;background:#039687;"></div>
<div class="a" style="left:98.50px;top:60.40px;width:0.60px;height:15.60px;background:rgba(255,255,255,0.5);"></div>
<div class="a" style="left:98.50px;top:76.00px;width:0.60px;height:34.60px;background:#ececec;"></div>
<div class="a" style="left:163.00px;top:60.40px;width:0.60px;height:15.60px;background:rgba(255,255,255,0.5);"></div>
<div class="a" style="left:163.00px;top:76.00px;width:0.60px;height:34.60px;background:#ececec;"></div>
<div class="a" style="left:227.40px;top:60.40px;width:0.60px;height:15.60px;background:rgba(255,255,255,0.5);"></div>
<div class="a" style="left:227.40px;top:76.00px;width:0.60px;height:34.60px;background:#ececec;"></div>
<div class="a" style="left:291.80px;top:60.40px;width:0.60px;height:15.60px;background:rgba(255,255,255,0.5);"></div>
<div class="a" style="left:291.80px;top:76.00px;width:0.60px;height:34.60px;background:#ececec;"></div>
<div class="a" style="left:356.90px;top:60.40px;width:0.60px;height:15.60px;background:rgba(255,255,255,0.5);"></div>
<div class="a" style="left:356.90px;top:76.00px;width:0.60px;height:34.60px;background:#ececec;"></div>
<div class="a" style="left:421.10px;top:60.40px;width:0.60px;height:15.60px;background:rgba(255,255,255,0.5);"></div>
<div class="a" style="left:421.10px;top:76.00px;width:0.60px;height:34.60px;background:#ececec;"></div>
<div class="a" style="left:484.70px;top:60.40px;width:0.60px;height:15.60px;background:rgba(255,255,255,0.5);"></div>
<div class="a" style="left:484.70px;top:76.00px;width:0.60px;height:34.60px;background:#ececec;"></div>
<div class="a" style="left:527.80px;top:60.40px;width:0.60px;height:15.60px;background:rgba(255,255,255,0.5);"></div>
<div class="a" style="left:527.80px;top:76.00px;width:0.60px;height:34.60px;background:#ececec;"></div>
<div class="a" style="left:591.90px;top:60.40px;width:0.60px;height:15.60px;background:rgba(255,255,255,0.5);"></div>
<div class="a" style="left:591.90px;top:76.00px;width:0.60px;height:34.60px;background:#ececec;"></div>
<div class="a" style="left:656.10px;top:60.40px;width:0.60px;height:15.60px;background:rgba(255,255,255,0.5);"></div>
<div class="a" style="left:656.10px;top:76.00px;width:0.60px;height:34.60px;background:#ececec;"></div>
<svg class="a" style="left:86.90px;top:64.20px;transform:scale(0.7);transform-origin:0 0;" width="11" height="10" viewBox="0 0 11 10"><path d="M6 1.2 H1.8 Q0.8 1.2 0.8 2.2 V8.6 Q0.8 9.4 1.8 9.4 H8 Q9 9.4 9 8.4 V5" fill="none" stroke="#e6f5f2" stroke-width="1.2"/><path d="M3.5 7 L4 5 L8.8 0.6 L10.4 2.2 L5.6 6.6 Z" fill="none" stroke="#e6f5f2" stroke-width="1.2" stroke-linejoin="round"/></svg>
<span class="t" style="top:65.45px;font-size:6.2px;line-height:6.2px;color:#fff;left:131.30px;transform:translateX(-50%) scaleX(0.9611);transform-origin:50% 50%;">Chủ hàng</span>
<span class="t" style="top:65.45px;font-size:6.2px;line-height:6.2px;color:#fff;left:195.60px;transform:translateX(-50%) scaleX(0.9626);transform-origin:50% 50%;">Đơn vị trả hàng</span>
<span class="t" style="top:65.45px;font-size:6.2px;line-height:6.2px;color:#fff;left:260.20px;transform:translateX(-50%) scaleX(0.9370);transform-origin:50% 50%;">Tàu</span>
<span class="t" style="top:65.45px;font-size:6.2px;line-height:6.2px;color:#fff;left:324.50px;transform:translateX(-50%) scaleX(0.9831);transform-origin:50% 50%;">Hãng tàu</span>
<span class="t" style="top:65.45px;font-size:6.2px;line-height:6.2px;color:#fff;left:388.60px;transform:translateX(-50%) scaleX(0.9852);transform-origin:50% 50%;">Ngày trả hàng</span>
<span class="t" style="top:65.45px;font-size:6.2px;line-height:6.2px;color:#fff;left:453.10px;transform:translateX(-50%) scaleX(0.9778);transform-origin:50% 50%;">Số chuyến</span>
<span class="t" style="top:65.45px;font-size:6.2px;line-height:6.2px;color:#fff;left:506.90px;transform:translateX(-50%);">Số cont</span>
<span class="t" style="top:65.45px;font-size:6.2px;line-height:6.2px;color:#fff;left:560.40px;transform:translateX(-50%) scaleX(1.0149);transform-origin:50% 50%;">Loại cont</span>
<span class="t" style="top:65.45px;font-size:6.2px;line-height:6.2px;color:#fff;left:624.50px;transform:translateX(-50%) scaleX(1.0072);transform-origin:50% 50%;">Địa điểm trả</span>
<div class="a" style="left:83.20px;top:87.70px;width:660.00px;height:0.60px;background:#ececec;"></div>
<span class="t" style="top:79.88px;font-size:6.4px;line-height:6.4px;color:#333;left:88.60px;">1</span>
<div class="a" style="left:83.20px;top:99.20px;width:660.00px;height:0.60px;background:#ececec;"></div>
<span class="t" style="top:91.88px;font-size:6.4px;line-height:6.4px;color:#333;left:88.60px;">2</span>
<div class="a" style="left:83.20px;top:110.30px;width:660.00px;height:0.60px;background:#ececec;"></div>
<span class="t" style="top:103.38px;font-size:6.4px;line-height:6.4px;color:#333;left:88.60px;">3</span>
<span class="t" style="top:80.51px;font-size:5.9px;line-height:5.9px;color:#2a2aee;font-weight:700;left:103.30px;transform:scaleX(0.8010);transform-origin:0 50%;">Company Drive Future E...</span>
<span class="t" style="top:80.51px;font-size:5.9px;line-height:5.9px;color:#2a2aee;font-weight:700;left:167.80px;transform:scaleX(0.8126);transform-origin:0 50%;">Company Trust Rise Oc...</span>
<span class="t" style="top:80.51px;font-size:5.9px;line-height:5.9px;color:#2a2aee;font-weight:700;left:232.10px;transform:scaleX(0.8304);transform-origin:0 50%;">Hai An Time</span>
<span class="t" style="top:80.51px;font-size:5.9px;line-height:5.9px;color:#2a2aee;font-weight:700;left:296.40px;transform:scaleX(0.8206);transform-origin:0 50%;">Việt Đức (HAFC)</span>
<span class="t" style="top:80.51px;font-size:5.9px;line-height:5.9px;color:#2a2aee;font-weight:700;left:360.80px;transform:scaleX(0.9327);transform-origin:0 50%;">28/05/2023</span>
<span class="t" style="top:80.51px;font-size:5.9px;line-height:5.9px;color:#2a2aee;font-weight:700;left:424.90px;transform:scaleX(0.9154);transform-origin:0 50%;">3365</span>
<span class="t" style="top:80.51px;font-size:5.9px;line-height:5.9px;color:#2a2aee;font-weight:700;left:489.30px;transform:scaleX(0.8635);transform-origin:0 50%;">CAAU2137542</span>
<span class="t" style="top:80.51px;font-size:5.9px;line-height:5.9px;color:#2a2aee;font-weight:700;left:532.10px;transform:scaleX(0.8607);transform-origin:0 50%;">Cont 20</span>
<span class="t" style="top:80.51px;font-size:5.9px;line-height:5.9px;color:#2a2aee;font-weight:700;left:596.40px;transform:scaleX(0.8042);transform-origin:0 50%;">Khu phố 4, QL 1K, Bửu ...</span>
<span class="t" style="top:92.51px;font-size:5.9px;line-height:5.9px;color:#2a2aee;font-weight:700;left:103.30px;transform:scaleX(0.8062);transform-origin:0 50%;">Company Vision Source...</span>
<span class="t" style="top:92.51px;font-size:5.9px;line-height:5.9px;color:#2a2aee;font-weight:700;left:167.80px;transform:scaleX(0.7988);transform-origin:0 50%;">Company Quantum Fusi...</span>
<span class="t" style="top:92.51px;font-size:5.9px;line-height:5.9px;color:#2a2aee;font-weight:700;left:232.10px;transform:scaleX(0.8369);transform-origin:0 50%;">Hai An Park</span>
<span class="t" style="top:92.51px;font-size:5.9px;line-height:5.9px;color:#2a2aee;font-weight:700;left:296.40px;transform:scaleX(0.8136);transform-origin:0 50%;">Hải An</span>
<span class="t" style="top:92.51px;font-size:5.9px;line-height:5.9px;color:#2a2aee;font-weight:700;left:360.80px;transform:scaleX(0.9327);transform-origin:0 50%;">31/12/2022</span>
<span class="t" style="top:92.51px;font-size:5.9px;line-height:5.9px;color:#2a2aee;font-weight:700;left:424.90px;transform:scaleX(0.9154);transform-origin:0 50%;">3405</span>
<span class="t" style="top:92.51px;font-size:5.9px;line-height:5.9px;color:#2a2aee;font-weight:700;left:489.30px;transform:scaleX(0.8635);transform-origin:0 50%;">CAAU2137542</span>
<span class="t" style="top:92.51px;font-size:5.9px;line-height:5.9px;color:#2a2aee;font-weight:700;left:532.10px;transform:scaleX(0.8607);transform-origin:0 50%;">Cont 20</span>
<span class="t" style="top:92.51px;font-size:5.9px;line-height:5.9px;color:#2a2aee;font-weight:700;left:596.40px;transform:scaleX(0.7879);transform-origin:0 50%;">220 Quốc lộ 1K, Linh Xu...</span>
<span class="t" style="top:104.01px;font-size:5.9px;line-height:5.9px;color:#2a2aee;font-weight:700;left:103.30px;transform:scaleX(0.8086);transform-origin:0 50%;">Company Impact Conne...</span>
<div class="a" style="left:83.20px;top:110.60px;width:276.20px;height:12.80px;background:#f6f6f6;"></div>
<div class="a" style="left:98.50px;top:110.60px;width:0.60px;height:12.80px;background:#e2e2e2;"></div>
<div class="a" style="left:115.70px;top:110.60px;width:0.60px;height:12.80px;background:#e2e2e2;"></div>
<div class="a" style="left:132.30px;top:110.60px;width:0.60px;height:12.80px;background:#e2e2e2;"></div>
<div class="a" style="left:149.30px;top:110.60px;width:0.60px;height:12.80px;background:#e2e2e2;"></div>
<div class="a" style="left:165.50px;top:110.60px;width:0.60px;height:12.80px;background:#e2e2e2;"></div>
<div class="a" style="left:182.50px;top:110.60px;width:0.60px;height:12.80px;background:#e2e2e2;"></div>
<div class="a" style="left:199.10px;top:110.60px;width:0.60px;height:12.80px;background:#e2e2e2;"></div>
<div class="a" style="left:219.60px;top:110.60px;width:0.60px;height:12.80px;background:#e2e2e2;"></div>
<div class="a" style="left:238.80px;top:110.60px;width:0.60px;height:12.80px;background:#e2e2e2;"></div>
<div class="a" style="left:359.10px;top:110.60px;width:0.60px;height:12.80px;background:#e2e2e2;"></div>
<span class="t" style="top:114.59px;font-size:5.8px;line-height:5.8px;color:#555;left:91.00px;transform:translateX(-50%);">F1</span>
<span class="t" style="top:114.59px;font-size:5.8px;line-height:5.8px;color:#555;left:107.40px;transform:translateX(-50%);">F2</span>
<span class="t" style="top:114.59px;font-size:5.8px;line-height:5.8px;color:#555;left:124.30px;transform:translateX(-50%);">F3</span>
<span class="t" style="top:114.59px;font-size:5.8px;line-height:5.8px;color:#555;left:141.10px;transform:translateX(-50%);">F4</span>
<span class="t" style="top:114.59px;font-size:5.8px;line-height:5.8px;color:#555;left:157.70px;transform:translateX(-50%);">F6</span>
<span class="t" style="top:114.59px;font-size:5.8px;line-height:5.8px;color:#555;left:174.30px;transform:translateX(-50%);">F8</span>
<span class="t" style="top:114.59px;font-size:5.8px;line-height:5.8px;color:#555;left:191.10px;transform:translateX(-50%);">F9</span>
<span class="t" style="top:114.59px;font-size:5.8px;line-height:5.8px;color:#555;left:209.65px;transform:translateX(-50%);">F10</span>
<span class="t" style="top:114.59px;font-size:5.8px;line-height:5.8px;color:#555;left:229.50px;transform:translateX(-50%);">F11</span>
<span class="t" style="top:114.59px;font-size:5.8px;line-height:5.8px;color:#555;left:244.40px;transform:scaleX(0.8826);transform-origin:0 50%;">Hold the "Ctrl" key to use the keyboard shortcuts</span>
<div class="a" style="left:83.20px;top:60.40px;width:338.40px;height:63.60px;border:2px solid #f0161a;box-sizing:border-box;border-radius:1.5px;"></div>
</div>
</body></html>
